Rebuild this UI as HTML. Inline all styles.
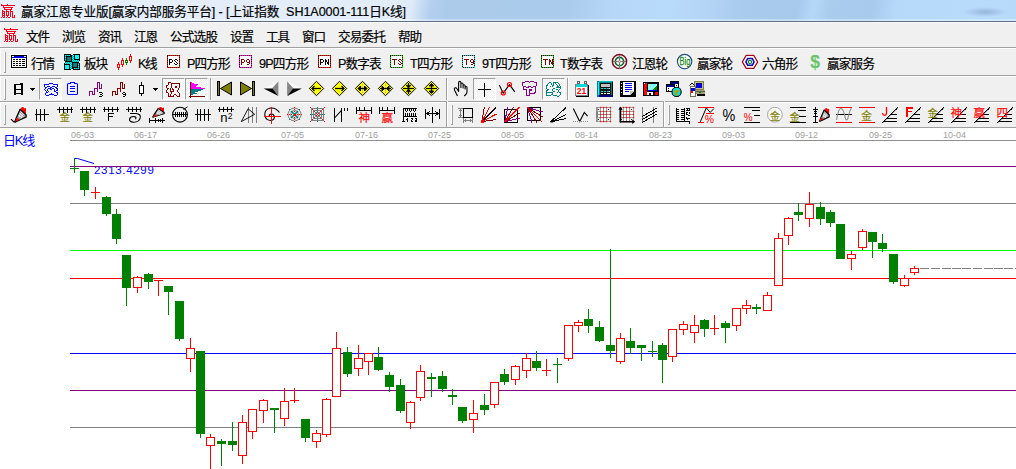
<!DOCTYPE html>
<html lang="zh"><head><meta charset="utf-8"><title>赢家江恩专业版</title>
<style>
html,body{margin:0;padding:0;background:#fff}
body{width:1016px;height:469px;overflow:hidden;position:relative;font-family:"Liberation Sans",sans-serif}
#win{position:absolute;left:0;top:0;width:1016px;height:469px;overflow:hidden;background:#fff}
#win div,#win svg,#win span,#win i,#win b{position:absolute}
svg.t{overflow:visible;pointer-events:none}
svg.ic{overflow:visible}
svg.t text,text.cj{font-family:"Liberation Sans","Noto Sans CJK SC",sans-serif}
svg.t text{white-space:pre}
#title{left:0;top:0;width:1016px;height:22px;background:radial-gradient(ellipse 22px 5px at 985px 12px,rgba(120,150,190,.55),rgba(120,150,190,0)),linear-gradient(100deg,#dfeaf8 0,#dbe8f8 406px,#c8ddf4 415px,#b3cfee 426px,#accbeb 442px,#abcbec 560px,#b6d7f8 605px,#b9dbfb 660px,#b3d4f5 700px,#a9cbed 730px,#a7c9eb 787px,#b5d7f8 802px,#aacced 818px,#a8caec 860px,#b6d8f9 884px,#b9dbfb 960px,#b7d9fa 1016px)}
#title:after{content:"";position:absolute;left:0;top:19px;width:1016px;height:2px;background:linear-gradient(rgba(255,255,255,.25),rgba(255,255,255,.5))}
#title:before{content:"";position:absolute;left:0;top:21px;width:1016px;height:1px;background:#5f6f85;z-index:2}
#title .glow{left:0;top:0;width:460px;height:20px;background:linear-gradient(90deg,rgba(255,255,255,.2) 0,rgba(255,255,255,.2) 400px,rgba(255,255,255,0) 422px)}
#menu{left:0;top:22px;width:1016px;height:25px;background:linear-gradient(#fafafa 0 1px,#f0f0f0 1px)}
.tb{left:0;width:1016px;background:#f0f0f0}
#tb1{top:47px;height:28px;background:linear-gradient(#a0a0a0 0 1px,#fff 1px 2px,#f0f0f0 2px)}
#tb2{top:75px;height:26px;background:linear-gradient(#a0a0a0 0 1px,#fff 1px 2px,#f0f0f0 2px)}
#tb3{top:101px;height:27px;background:linear-gradient(#a0a0a0 0 1px,#fff 1px 2px,#f0f0f0 2px 26px,#a0a0a0 26px)}
i.grip{width:1px;background:#fff;border-right:1px solid #a0a0a0;border-bottom:1px solid #a0a0a0}
i.bandsep{top:0;width:1px;height:26px;background:#a0a0a0;border-right:1px solid #fff}
i.sep{width:1px;height:22px;background:#a0a0a0;border-right:1px solid #fff}
i.pr{width:22px;height:21px;border:1px solid;border-color:#a0a0a0 #fff #fff #a0a0a0;background:repeating-conic-gradient(#fff 0 25%,#f0f0f0 0 50%) 0 0/2px 2px}
#view{left:0;top:128px;width:1016px;height:341px;background:#fff}
#chart{left:0;top:0}
.dt{top:2px;font-size:9px;line-height:10px;color:#a0a0a0;white-space:nowrap}
#hi{left:95px;top:35px;font-size:11.5px;line-height:14px;color:#0000ff;letter-spacing:.75px;white-space:nowrap}

#menu:after,.tb:after{content:"";position:absolute;left:0;top:1px;bottom:0;width:1px;background:#fafafa}
#tb3:after{bottom:1px}
#hi{left:94px;letter-spacing:.68px}

</style></head>
<body>

<div id="win">
<div id="title"><div class="glow"></div><svg class="ic" style="left:0;top:0" width="16" height="20" viewBox="0 0 16 20" shape-rendering="crispEdges"><title>赢</title><rect x="1" y="4" width="1" height="1" fill="#f4001c"/><rect x="7" y="4" width="1" height="1" fill="#f4001c"/><rect x="1" y="5" width="14" height="1" fill="#f4001c"/><rect x="3" y="6" width="1" height="1" fill="#f4001c"/><rect x="3" y="7" width="10" height="1" fill="#f4001c"/><rect x="4" y="8" width="1" height="1" fill="#f4001c"/><rect x="11" y="8" width="1" height="1" fill="#f4001c"/><rect x="4" y="9" width="8" height="1" fill="#f4001c"/><rect x="2" y="10" width="1" height="1" fill="#f4001c"/><rect x="6" y="10" width="1" height="1" fill="#f4001c"/><rect x="10" y="10" width="1" height="1" fill="#f4001c"/><rect x="2" y="11" width="3" height="1" fill="#f4001c"/><rect x="6" y="11" width="3" height="1" fill="#f4001c"/><rect x="10" y="11" width="3" height="1" fill="#f4001c"/><rect x="2" y="12" width="1" height="1" fill="#f4001c"/><rect x="4" y="12" width="1" height="1" fill="#f4001c"/><rect x="6" y="12" width="1" height="1" fill="#f4001c"/><rect x="8" y="12" width="1" height="1" fill="#f4001c"/><rect x="10" y="12" width="1" height="1" fill="#f4001c"/><rect x="12" y="12" width="1" height="1" fill="#f4001c"/><rect x="2" y="13" width="3" height="1" fill="#f4001c"/><rect x="6" y="13" width="1" height="1" fill="#f4001c"/><rect x="8" y="13" width="1" height="1" fill="#f4001c"/><rect x="10" y="13" width="1" height="1" fill="#f4001c"/><rect x="12" y="13" width="1" height="1" fill="#f4001c"/><rect x="2" y="14" width="1" height="1" fill="#f4001c"/><rect x="4" y="14" width="1" height="1" fill="#f4001c"/><rect x="6" y="14" width="1" height="1" fill="#f4001c"/><rect x="8" y="14" width="1" height="1" fill="#f4001c"/><rect x="10" y="14" width="1" height="1" fill="#f4001c"/><rect x="12" y="14" width="1" height="1" fill="#f4001c"/><rect x="2" y="15" width="3" height="1" fill="#f4001c"/><rect x="6" y="15" width="3" height="1" fill="#f4001c"/><rect x="10" y="15" width="1" height="1" fill="#f4001c"/><rect x="12" y="15" width="1" height="1" fill="#f4001c"/><rect x="14" y="15" width="1" height="1" fill="#f4001c"/><rect x="2" y="16" width="1" height="1" fill="#f4001c"/><rect x="4" y="16" width="1" height="1" fill="#f4001c"/><rect x="7" y="16" width="1" height="1" fill="#f4001c"/><rect x="10" y="16" width="1" height="1" fill="#f4001c"/><rect x="12" y="16" width="1" height="1" fill="#f4001c"/><rect x="14" y="16" width="1" height="1" fill="#f4001c"/><rect x="1" y="17" width="1" height="1" fill="#f4001c"/><rect x="3" y="17" width="2" height="1" fill="#f4001c"/><rect x="6" y="17" width="1" height="1" fill="#f4001c"/><rect x="8" y="17" width="2" height="1" fill="#f4001c"/><rect x="12" y="17" width="3" height="1" fill="#f4001c"/></svg><svg class="t" style="left:21px;top:2px" width="387" height="18" role="img"><text x="0" y="13.63" font-size="12.6" fill="#000" stroke="#000" stroke-width="0.18" textLength="385" lengthAdjust="spacing" xml:space="preserve">赢家江恩专业版[赢家内部服务平台] - [上证指数  SH1A0001-111日K线]</text></svg></div>
<div id="menu"><svg class="ic" style="left:3px;top:2px" width="16" height="20" viewBox="0 0 16 20" shape-rendering="crispEdges"><title>赢</title><rect x="1" y="4" width="1" height="1" fill="#f4001c"/><rect x="7" y="4" width="1" height="1" fill="#f4001c"/><rect x="1" y="5" width="14" height="1" fill="#f4001c"/><rect x="3" y="6" width="1" height="1" fill="#f4001c"/><rect x="3" y="7" width="10" height="1" fill="#f4001c"/><rect x="4" y="8" width="1" height="1" fill="#f4001c"/><rect x="11" y="8" width="1" height="1" fill="#f4001c"/><rect x="4" y="9" width="8" height="1" fill="#f4001c"/><rect x="2" y="10" width="1" height="1" fill="#f4001c"/><rect x="6" y="10" width="1" height="1" fill="#f4001c"/><rect x="10" y="10" width="1" height="1" fill="#f4001c"/><rect x="2" y="11" width="3" height="1" fill="#f4001c"/><rect x="6" y="11" width="3" height="1" fill="#f4001c"/><rect x="10" y="11" width="3" height="1" fill="#f4001c"/><rect x="2" y="12" width="1" height="1" fill="#f4001c"/><rect x="4" y="12" width="1" height="1" fill="#f4001c"/><rect x="6" y="12" width="1" height="1" fill="#f4001c"/><rect x="8" y="12" width="1" height="1" fill="#f4001c"/><rect x="10" y="12" width="1" height="1" fill="#f4001c"/><rect x="12" y="12" width="1" height="1" fill="#f4001c"/><rect x="2" y="13" width="3" height="1" fill="#f4001c"/><rect x="6" y="13" width="1" height="1" fill="#f4001c"/><rect x="8" y="13" width="1" height="1" fill="#f4001c"/><rect x="10" y="13" width="1" height="1" fill="#f4001c"/><rect x="12" y="13" width="1" height="1" fill="#f4001c"/><rect x="2" y="14" width="1" height="1" fill="#f4001c"/><rect x="4" y="14" width="1" height="1" fill="#f4001c"/><rect x="6" y="14" width="1" height="1" fill="#f4001c"/><rect x="8" y="14" width="1" height="1" fill="#f4001c"/><rect x="10" y="14" width="1" height="1" fill="#f4001c"/><rect x="12" y="14" width="1" height="1" fill="#f4001c"/><rect x="2" y="15" width="3" height="1" fill="#f4001c"/><rect x="6" y="15" width="3" height="1" fill="#f4001c"/><rect x="10" y="15" width="1" height="1" fill="#f4001c"/><rect x="12" y="15" width="1" height="1" fill="#f4001c"/><rect x="14" y="15" width="1" height="1" fill="#f4001c"/><rect x="2" y="16" width="1" height="1" fill="#f4001c"/><rect x="4" y="16" width="1" height="1" fill="#f4001c"/><rect x="7" y="16" width="1" height="1" fill="#f4001c"/><rect x="10" y="16" width="1" height="1" fill="#f4001c"/><rect x="12" y="16" width="1" height="1" fill="#f4001c"/><rect x="14" y="16" width="1" height="1" fill="#f4001c"/><rect x="1" y="17" width="1" height="1" fill="#f4001c"/><rect x="3" y="17" width="2" height="1" fill="#f4001c"/><rect x="6" y="17" width="1" height="1" fill="#f4001c"/><rect x="8" y="17" width="2" height="1" fill="#f4001c"/><rect x="12" y="17" width="3" height="1" fill="#f4001c"/></svg><svg class="t" style="left:26px;top:5px" width="26" height="18" role="img"><text x="0" y="13.63" font-size="12.6" fill="#000" stroke="#000" stroke-width="0.18" textLength="24" lengthAdjust="spacing">文件</text></svg><svg class="t" style="left:62px;top:5px" width="26" height="18" role="img"><text x="0" y="13.63" font-size="12.6" fill="#000" stroke="#000" stroke-width="0.18" textLength="24" lengthAdjust="spacing">浏览</text></svg><svg class="t" style="left:98px;top:5px" width="26" height="18" role="img"><text x="0" y="13.63" font-size="12.6" fill="#000" stroke="#000" stroke-width="0.18" textLength="24" lengthAdjust="spacing">资讯</text></svg><svg class="t" style="left:134px;top:5px" width="26" height="18" role="img"><text x="0" y="13.63" font-size="12.6" fill="#000" stroke="#000" stroke-width="0.18" textLength="24" lengthAdjust="spacing">江恩</text></svg><svg class="t" style="left:170px;top:5px" width="50" height="18" role="img"><text x="0" y="13.63" font-size="12.6" fill="#000" stroke="#000" stroke-width="0.18" textLength="48" lengthAdjust="spacing">公式选股</text></svg><svg class="t" style="left:230px;top:5px" width="26" height="18" role="img"><text x="0" y="13.63" font-size="12.6" fill="#000" stroke="#000" stroke-width="0.18" textLength="24" lengthAdjust="spacing">设置</text></svg><svg class="t" style="left:266px;top:5px" width="26" height="18" role="img"><text x="0" y="13.63" font-size="12.6" fill="#000" stroke="#000" stroke-width="0.18" textLength="24" lengthAdjust="spacing">工具</text></svg><svg class="t" style="left:302px;top:5px" width="26" height="18" role="img"><text x="0" y="13.63" font-size="12.6" fill="#000" stroke="#000" stroke-width="0.18" textLength="24" lengthAdjust="spacing">窗口</text></svg><svg class="t" style="left:338px;top:5px" width="50" height="18" role="img"><text x="0" y="13.63" font-size="12.6" fill="#000" stroke="#000" stroke-width="0.18" textLength="48" lengthAdjust="spacing">交易委托</text></svg><svg class="t" style="left:398px;top:5px" width="26" height="18" role="img"><text x="0" y="13.63" font-size="12.6" fill="#000" stroke="#000" stroke-width="0.18" textLength="24" lengthAdjust="spacing">帮助</text></svg></div>
<div id="tb1" class="tb"><i class="grip" style="left:4px;top:5px;height:20px"></i><svg class="ic" style="left:10px;top:7px" width="18" height="15" viewBox="10 54 18 15" shape-rendering="crispEdges"><rect x="10" y="54" width="18" height="15" fill="#fff"/><rect x="11.5" y="55.5" width="15" height="12" fill="#fff" stroke="#000" stroke-width="1"/><rect x="12" y="56" width="14" height="2" fill="#0000e0"/><rect x="12" y="56" width="2" height="1" fill="#fff"/><rect x="24" y="56" width="2" height="1" fill="#fff"/><rect x="13" y="59" width="2" height="1" fill="#000"/><rect x="16" y="59" width="2" height="1" fill="#000"/><rect x="19" y="59" width="2" height="1" fill="#000"/><rect x="22" y="59" width="3" height="1" fill="#000"/><rect x="13" y="61" width="2" height="1" fill="#000"/><rect x="16" y="61" width="2" height="1" fill="#000"/><rect x="19" y="61" width="2" height="1" fill="#000"/><rect x="22" y="61" width="3" height="1" fill="#000"/><rect x="13" y="63" width="2" height="1" fill="#000"/><rect x="16" y="63" width="2" height="1" fill="#000"/><rect x="19" y="63" width="2" height="1" fill="#000"/><rect x="22" y="63" width="3" height="1" fill="#000"/><rect x="13" y="65" width="2" height="1" fill="#000"/><rect x="16" y="65" width="2" height="1" fill="#000"/><rect x="19" y="65" width="2" height="1" fill="#000"/><rect x="22" y="65" width="3" height="1" fill="#000"/></svg><svg class="t" style="left:31px;top:7px" width="26" height="18" role="img"><text x="0" y="13.63" font-size="12.6" fill="#000" stroke="#000" stroke-width="0.18" textLength="24" lengthAdjust="spacing">行情</text></svg><svg class="ic" style="left:64px;top:7px" width="16" height="16" viewBox="64 54 16 16" shape-rendering="crispEdges"><rect x="64" y="54" width="16" height="16" fill="#000"/><rect x="71" y="54" width="2" height="1" fill="#f0f0f0"/><rect x="71" y="69" width="2" height="1" fill="#f0f0f0"/><rect x="64" y="61" width="1" height="2" fill="#f0f0f0"/><rect x="79" y="61" width="1" height="2" fill="#f0f0f0"/><rect x="65" y="55" width="1" height="1" fill="#00ffff"/><rect x="66" y="55" width="1" height="1" fill="#009c9c"/><rect x="67" y="55" width="1" height="1" fill="#00ffff"/><rect x="68" y="55" width="1" height="1" fill="#009c9c"/><rect x="69" y="55" width="1" height="1" fill="#00ffff"/><rect x="65" y="56" width="1" height="1" fill="#009c9c"/><rect x="65" y="57" width="1" height="1" fill="#00ffff"/><rect x="65" y="58" width="1" height="1" fill="#009c9c"/><rect x="65" y="59" width="1" height="1" fill="#00ffff"/><rect x="65" y="60" width="1" height="1" fill="#009c9c"/><rect x="67" y="57" width="4" height="4" fill="#008080"/><rect x="75" y="55" width="4" height="4" fill="#00ffff"/><rect x="72" y="55" width="1" height="1" fill="#009c9c"/><rect x="73" y="55" width="1" height="1" fill="#00ffff"/><rect x="72" y="56" width="1" height="1" fill="#00ffff"/><rect x="73" y="56" width="1" height="1" fill="#009c9c"/><rect x="72" y="57" width="1" height="1" fill="#009c9c"/><rect x="73" y="57" width="1" height="1" fill="#00ffff"/><rect x="72" y="58" width="1" height="1" fill="#00ffff"/><rect x="73" y="58" width="1" height="1" fill="#009c9c"/><rect x="72" y="59" width="1" height="1" fill="#009c9c"/><rect x="73" y="59" width="1" height="1" fill="#00ffff"/><rect x="72" y="60" width="1" height="1" fill="#00ffff"/><rect x="73" y="60" width="1" height="1" fill="#009c9c"/><rect x="72" y="61" width="1" height="1" fill="#009c9c"/><rect x="73" y="61" width="1" height="1" fill="#00ffff"/><rect x="74" y="60" width="1" height="1" fill="#00ffff"/><rect x="75" y="60" width="1" height="1" fill="#009c9c"/><rect x="76" y="60" width="1" height="1" fill="#00ffff"/><rect x="77" y="60" width="1" height="1" fill="#009c9c"/><rect x="78" y="60" width="1" height="1" fill="#00ffff"/><rect x="74" y="61" width="1" height="1" fill="#009c9c"/><rect x="75" y="61" width="1" height="1" fill="#00ffff"/><rect x="76" y="61" width="1" height="1" fill="#009c9c"/><rect x="77" y="61" width="1" height="1" fill="#00ffff"/><rect x="78" y="61" width="1" height="1" fill="#009c9c"/><rect x="65" y="65" width="4" height="4" fill="#00ffff"/><rect x="65" y="62" width="1" height="1" fill="#009c9c"/><rect x="66" y="62" width="1" height="1" fill="#00ffff"/><rect x="67" y="62" width="1" height="1" fill="#009c9c"/><rect x="68" y="62" width="1" height="1" fill="#00ffff"/><rect x="69" y="62" width="1" height="1" fill="#009c9c"/><rect x="70" y="62" width="1" height="1" fill="#00ffff"/><rect x="71" y="62" width="1" height="1" fill="#009c9c"/><rect x="65" y="63" width="1" height="1" fill="#00ffff"/><rect x="66" y="63" width="1" height="1" fill="#009c9c"/><rect x="67" y="63" width="1" height="1" fill="#00ffff"/><rect x="68" y="63" width="1" height="1" fill="#009c9c"/><rect x="69" y="63" width="1" height="1" fill="#00ffff"/><rect x="70" y="63" width="1" height="1" fill="#009c9c"/><rect x="71" y="63" width="1" height="1" fill="#00ffff"/><rect x="70" y="64" width="1" height="1" fill="#00ffff"/><rect x="71" y="64" width="1" height="1" fill="#009c9c"/><rect x="70" y="65" width="1" height="1" fill="#009c9c"/><rect x="71" y="65" width="1" height="1" fill="#00ffff"/><rect x="70" y="66" width="1" height="1" fill="#00ffff"/><rect x="71" y="66" width="1" height="1" fill="#009c9c"/><rect x="70" y="67" width="1" height="1" fill="#009c9c"/><rect x="71" y="67" width="1" height="1" fill="#00ffff"/><rect x="70" y="68" width="1" height="1" fill="#00ffff"/><rect x="71" y="68" width="1" height="1" fill="#009c9c"/><rect x="73" y="63" width="4" height="4" fill="#008080"/><rect x="78" y="63" width="1" height="1" fill="#009c9c"/><rect x="78" y="64" width="1" height="1" fill="#00ffff"/><rect x="78" y="65" width="1" height="1" fill="#009c9c"/><rect x="78" y="66" width="1" height="1" fill="#00ffff"/><rect x="78" y="67" width="1" height="1" fill="#009c9c"/><rect x="78" y="68" width="1" height="1" fill="#00ffff"/><rect x="74" y="68" width="1" height="1" fill="#00ffff"/><rect x="75" y="68" width="1" height="1" fill="#009c9c"/><rect x="76" y="68" width="1" height="1" fill="#00ffff"/><rect x="77" y="68" width="1" height="1" fill="#009c9c"/></svg><svg class="t" style="left:84px;top:7px" width="26" height="18" role="img"><text x="0" y="13.63" font-size="12.6" fill="#000" stroke="#000" stroke-width="0.18" textLength="24" lengthAdjust="spacing">板块</text></svg><svg class="ic" style="left:115px;top:5px" width="20" height="20" viewBox="115 52 20 20" shape-rendering="crispEdges"><g opacity=".55" stroke="#fff" stroke-width="2"><rect x="117.5" y="63.5" width="2" height="5" fill="#fff" stroke="#fff" stroke-width="3"/><rect x="121.5" y="59.5" width="2" height="6" fill="#fff" stroke="#fff" stroke-width="3"/><rect x="125.5" y="59.5" width="2" height="4" fill="#fff" stroke="#fff" stroke-width="3"/><rect x="129.5" y="55.5" width="2" height="6" fill="#fff" stroke="#fff" stroke-width="3"/></g><rect x="118" y="62" width="1" height="8" fill="#ff0000"/><rect x="117.5" y="64.5" width="2" height="3" fill="#fff" stroke="#ff0000" stroke-width="1"/><rect x="122" y="58" width="1" height="9" fill="#ff0000"/><rect x="121.5" y="60.5" width="2" height="4" fill="#fff" stroke="#ff0000" stroke-width="1"/><rect x="126" y="58" width="1" height="7" fill="#008000"/><rect x="125.5" y="60.5" width="2" height="2" fill="#fff" stroke="#008000" stroke-width="1"/><rect x="130" y="54" width="1" height="9" fill="#ff0000"/><rect x="129.5" y="56.5" width="2" height="4" fill="#fff" stroke="#ff0000" stroke-width="1"/></svg><svg class="t" style="left:138px;top:7px" width="22" height="18" role="img"><text x="0" y="13.63" font-size="12.6" fill="#000" stroke="#000" stroke-width="0.18" textLength="19.6" lengthAdjust="spacing">K线</text></svg><svg class="ic" style="left:167px;top:8px" width="13" height="13" viewBox="167 55 13 13" shape-rendering="crispEdges"><title>PS</title><rect x="167.5" y="55.5" width="12" height="12" fill="#fcfcfc" stroke="#400000" stroke-width="1"/><rect x="167.5" y="55.5" width="12" height="12" fill="none" stroke="#ff0000" stroke-dasharray="1 1"/><rect x="169" y="59" width="1" height="1" fill="#000"/><rect x="170" y="59" width="1" height="1" fill="#000"/><rect x="171" y="59" width="1" height="1" fill="#000"/><rect x="169" y="60" width="1" height="1" fill="#000"/><rect x="172" y="60" width="1" height="1" fill="#000"/><rect x="169" y="61" width="1" height="1" fill="#000"/><rect x="172" y="61" width="1" height="1" fill="#000"/><rect x="169" y="62" width="1" height="1" fill="#000"/><rect x="170" y="62" width="1" height="1" fill="#000"/><rect x="171" y="62" width="1" height="1" fill="#000"/><rect x="169" y="63" width="1" height="1" fill="#000"/><rect x="169" y="64" width="1" height="1" fill="#000"/><rect x="175" y="59" width="1" height="1" fill="#000"/><rect x="176" y="59" width="1" height="1" fill="#000"/><rect x="174" y="60" width="1" height="1" fill="#000"/><rect x="177" y="60" width="1" height="1" fill="#000"/><rect x="175" y="61" width="1" height="1" fill="#000"/><rect x="176" y="62" width="1" height="1" fill="#000"/><rect x="174" y="63" width="1" height="1" fill="#000"/><rect x="177" y="63" width="1" height="1" fill="#000"/><rect x="175" y="64" width="1" height="1" fill="#000"/><rect x="176" y="64" width="1" height="1" fill="#000"/></svg><svg class="t" style="left:187px;top:7px" width="46" height="18" role="img"><text x="0" y="13.63" font-size="12.6" fill="#000" stroke="#000" stroke-width="0.18" textLength="43.5" lengthAdjust="spacing">P四方形</text></svg><svg class="ic" style="left:239px;top:8px" width="13" height="13" viewBox="239 55 13 13" shape-rendering="crispEdges"><title>P9</title><rect x="239.5" y="55.5" width="12" height="12" fill="#fcfcfc" stroke="#400000" stroke-width="1"/><rect x="239.5" y="55.5" width="12" height="12" fill="none" stroke="#ff00ff" stroke-dasharray="1 1"/><rect x="241" y="59" width="1" height="1" fill="#800000"/><rect x="242" y="59" width="1" height="1" fill="#800000"/><rect x="243" y="59" width="1" height="1" fill="#800000"/><rect x="241" y="60" width="1" height="1" fill="#800000"/><rect x="244" y="60" width="1" height="1" fill="#800000"/><rect x="241" y="61" width="1" height="1" fill="#800000"/><rect x="244" y="61" width="1" height="1" fill="#800000"/><rect x="241" y="62" width="1" height="1" fill="#800000"/><rect x="242" y="62" width="1" height="1" fill="#800000"/><rect x="243" y="62" width="1" height="1" fill="#800000"/><rect x="241" y="63" width="1" height="1" fill="#800000"/><rect x="241" y="64" width="1" height="1" fill="#800000"/><rect x="247" y="59" width="1" height="1" fill="#800000"/><rect x="248" y="59" width="1" height="1" fill="#800000"/><rect x="246" y="60" width="1" height="1" fill="#800000"/><rect x="249" y="60" width="1" height="1" fill="#800000"/><rect x="246" y="61" width="1" height="1" fill="#800000"/><rect x="249" y="61" width="1" height="1" fill="#800000"/><rect x="247" y="62" width="1" height="1" fill="#800000"/><rect x="248" y="62" width="1" height="1" fill="#800000"/><rect x="249" y="62" width="1" height="1" fill="#800000"/><rect x="249" y="63" width="1" height="1" fill="#800000"/><rect x="247" y="64" width="1" height="1" fill="#800000"/><rect x="248" y="64" width="1" height="1" fill="#800000"/></svg><svg class="t" style="left:259px;top:7px" width="52" height="18" role="img"><text x="0" y="13.63" font-size="12.6" fill="#000" stroke="#000" stroke-width="0.18" textLength="50.1" lengthAdjust="spacing">9P四方形</text></svg><svg class="ic" style="left:318px;top:8px" width="13" height="13" viewBox="318 55 13 13" shape-rendering="crispEdges"><title>PN</title><rect x="318.5" y="55.5" width="12" height="12" fill="#fcfcfc" stroke="#400000" stroke-width="1"/><rect x="318.5" y="55.5" width="12" height="12" fill="none" stroke="#ff0000" stroke-dasharray="1 1"/><rect x="320" y="59" width="1" height="1" fill="#000"/><rect x="321" y="59" width="1" height="1" fill="#000"/><rect x="322" y="59" width="1" height="1" fill="#000"/><rect x="320" y="60" width="1" height="1" fill="#000"/><rect x="323" y="60" width="1" height="1" fill="#000"/><rect x="320" y="61" width="1" height="1" fill="#000"/><rect x="323" y="61" width="1" height="1" fill="#000"/><rect x="320" y="62" width="1" height="1" fill="#000"/><rect x="321" y="62" width="1" height="1" fill="#000"/><rect x="322" y="62" width="1" height="1" fill="#000"/><rect x="320" y="63" width="1" height="1" fill="#000"/><rect x="320" y="64" width="1" height="1" fill="#000"/><rect x="325" y="59" width="1" height="1" fill="#000"/><rect x="328" y="59" width="1" height="1" fill="#000"/><rect x="325" y="60" width="1" height="1" fill="#000"/><rect x="326" y="60" width="1" height="1" fill="#000"/><rect x="328" y="60" width="1" height="1" fill="#000"/><rect x="325" y="61" width="1" height="1" fill="#000"/><rect x="326" y="61" width="1" height="1" fill="#000"/><rect x="328" y="61" width="1" height="1" fill="#000"/><rect x="325" y="62" width="1" height="1" fill="#000"/><rect x="327" y="62" width="1" height="1" fill="#000"/><rect x="328" y="62" width="1" height="1" fill="#000"/><rect x="325" y="63" width="1" height="1" fill="#000"/><rect x="327" y="63" width="1" height="1" fill="#000"/><rect x="328" y="63" width="1" height="1" fill="#000"/><rect x="325" y="64" width="1" height="1" fill="#000"/><rect x="328" y="64" width="1" height="1" fill="#000"/></svg><svg class="t" style="left:338px;top:7px" width="46" height="18" role="img"><text x="0" y="13.63" font-size="12.6" fill="#000" stroke="#000" stroke-width="0.18" textLength="43.5" lengthAdjust="spacing">P数字表</text></svg><svg class="ic" style="left:390px;top:8px" width="13" height="13" viewBox="390 55 13 13" shape-rendering="crispEdges"><title>TS</title><rect x="390.5" y="55.5" width="12" height="12" fill="#fcfcfc" stroke="#400000" stroke-width="1"/><rect x="390.5" y="55.5" width="12" height="12" fill="none" stroke="#00e000" stroke-dasharray="1 1"/><rect x="392" y="59" width="1" height="1" fill="#800000"/><rect x="393" y="59" width="1" height="1" fill="#800000"/><rect x="394" y="59" width="1" height="1" fill="#800000"/><rect x="395" y="59" width="1" height="1" fill="#800000"/><rect x="396" y="59" width="1" height="1" fill="#800000"/><rect x="394" y="60" width="1" height="1" fill="#800000"/><rect x="394" y="61" width="1" height="1" fill="#800000"/><rect x="394" y="62" width="1" height="1" fill="#800000"/><rect x="394" y="63" width="1" height="1" fill="#800000"/><rect x="394" y="64" width="1" height="1" fill="#800000"/><rect x="399" y="59" width="1" height="1" fill="#800000"/><rect x="400" y="59" width="1" height="1" fill="#800000"/><rect x="398" y="60" width="1" height="1" fill="#800000"/><rect x="401" y="60" width="1" height="1" fill="#800000"/><rect x="399" y="61" width="1" height="1" fill="#800000"/><rect x="400" y="62" width="1" height="1" fill="#800000"/><rect x="398" y="63" width="1" height="1" fill="#800000"/><rect x="401" y="63" width="1" height="1" fill="#800000"/><rect x="399" y="64" width="1" height="1" fill="#800000"/><rect x="400" y="64" width="1" height="1" fill="#800000"/></svg><svg class="t" style="left:410px;top:7px" width="45" height="18" role="img"><text x="0" y="13.63" font-size="12.6" fill="#000" stroke="#000" stroke-width="0.18" textLength="43.1" lengthAdjust="spacing">T四方形</text></svg><svg class="ic" style="left:462px;top:8px" width="13" height="13" viewBox="462 55 13 13" shape-rendering="crispEdges"><title>T9</title><rect x="462.5" y="55.5" width="12" height="12" fill="#fcfcfc" stroke="#400000" stroke-width="1"/><rect x="462.5" y="55.5" width="12" height="12" fill="none" stroke="#00e0e0" stroke-dasharray="1 1"/><rect x="464" y="59" width="1" height="1" fill="#800000"/><rect x="465" y="59" width="1" height="1" fill="#800000"/><rect x="466" y="59" width="1" height="1" fill="#800000"/><rect x="467" y="59" width="1" height="1" fill="#800000"/><rect x="468" y="59" width="1" height="1" fill="#800000"/><rect x="466" y="60" width="1" height="1" fill="#800000"/><rect x="466" y="61" width="1" height="1" fill="#800000"/><rect x="466" y="62" width="1" height="1" fill="#800000"/><rect x="466" y="63" width="1" height="1" fill="#800000"/><rect x="466" y="64" width="1" height="1" fill="#800000"/><rect x="471" y="59" width="1" height="1" fill="#800000"/><rect x="472" y="59" width="1" height="1" fill="#800000"/><rect x="470" y="60" width="1" height="1" fill="#800000"/><rect x="473" y="60" width="1" height="1" fill="#800000"/><rect x="470" y="61" width="1" height="1" fill="#800000"/><rect x="473" y="61" width="1" height="1" fill="#800000"/><rect x="471" y="62" width="1" height="1" fill="#800000"/><rect x="472" y="62" width="1" height="1" fill="#800000"/><rect x="473" y="62" width="1" height="1" fill="#800000"/><rect x="473" y="63" width="1" height="1" fill="#800000"/><rect x="471" y="64" width="1" height="1" fill="#800000"/><rect x="472" y="64" width="1" height="1" fill="#800000"/></svg><svg class="t" style="left:482px;top:7px" width="52" height="18" role="img"><text x="0" y="13.63" font-size="12.6" fill="#000" stroke="#000" stroke-width="0.18" textLength="49.7" lengthAdjust="spacing">9T四方形</text></svg><svg class="ic" style="left:541px;top:8px" width="13" height="13" viewBox="541 55 13 13" shape-rendering="crispEdges"><title>TN</title><rect x="541.5" y="55.5" width="12" height="12" fill="#fcfcfc" stroke="#400000" stroke-width="1"/><rect x="541.5" y="55.5" width="12" height="12" fill="none" stroke="#00c000" stroke-dasharray="1 1"/><rect x="543" y="59" width="1" height="1" fill="#800000"/><rect x="544" y="59" width="1" height="1" fill="#800000"/><rect x="545" y="59" width="1" height="1" fill="#800000"/><rect x="546" y="59" width="1" height="1" fill="#800000"/><rect x="547" y="59" width="1" height="1" fill="#800000"/><rect x="545" y="60" width="1" height="1" fill="#800000"/><rect x="545" y="61" width="1" height="1" fill="#800000"/><rect x="545" y="62" width="1" height="1" fill="#800000"/><rect x="545" y="63" width="1" height="1" fill="#800000"/><rect x="545" y="64" width="1" height="1" fill="#800000"/><rect x="549" y="59" width="1" height="1" fill="#800000"/><rect x="552" y="59" width="1" height="1" fill="#800000"/><rect x="549" y="60" width="1" height="1" fill="#800000"/><rect x="550" y="60" width="1" height="1" fill="#800000"/><rect x="552" y="60" width="1" height="1" fill="#800000"/><rect x="549" y="61" width="1" height="1" fill="#800000"/><rect x="550" y="61" width="1" height="1" fill="#800000"/><rect x="552" y="61" width="1" height="1" fill="#800000"/><rect x="549" y="62" width="1" height="1" fill="#800000"/><rect x="551" y="62" width="1" height="1" fill="#800000"/><rect x="552" y="62" width="1" height="1" fill="#800000"/><rect x="549" y="63" width="1" height="1" fill="#800000"/><rect x="551" y="63" width="1" height="1" fill="#800000"/><rect x="552" y="63" width="1" height="1" fill="#800000"/><rect x="549" y="64" width="1" height="1" fill="#800000"/><rect x="552" y="64" width="1" height="1" fill="#800000"/></svg><svg class="t" style="left:560px;top:7px" width="45" height="18" role="img"><text x="0" y="13.63" font-size="12.6" fill="#000" stroke="#000" stroke-width="0.18" textLength="43.1" lengthAdjust="spacing">T数字表</text></svg><svg class="ic" style="left:611px;top:6px" width="18" height="18" viewBox="611 53 18 18"><circle cx="619.5" cy="61.5" r="8.2" fill="#fff" stroke="#fff" stroke-width="0" shape-rendering="auto"/><circle cx="619.5" cy="61.5" r="7.1" fill="#fbfbfb" stroke="#7d0a1e" stroke-width="1.5" shape-rendering="auto"/><circle cx="619.5" cy="61.5" r="4.2" fill="none" stroke="#0b6a2b" stroke-width="1.7" shape-rendering="auto"/><circle cx="619.5" cy="61.5" r="1.6" fill="#f08a6a" stroke="none" stroke-width="1" shape-rendering="auto"/><line x1="613" y1="61.5" x2="626" y2="61.5" stroke="#7a7a7a" stroke-width="1" stroke-linecap="butt" shape-rendering="auto"/><line x1="619.5" y1="55" x2="619.5" y2="69" stroke="#7a7a7a" stroke-width="1" stroke-linecap="butt" shape-rendering="auto"/><circle cx="619.5" cy="61.5" r="0.8" fill="#ddd" stroke="none" stroke-width="1" shape-rendering="auto"/></svg><svg class="t" style="left:632px;top:7px" width="38" height="18" role="img"><text x="0" y="13.63" font-size="12.6" fill="#000" stroke="#000" stroke-width="0.18" textLength="36" lengthAdjust="spacing">江恩轮</text></svg><svg class="ic" style="left:676px;top:6px" width="18" height="18" viewBox="676 53 18 18"><circle cx="684.6" cy="61.6" r="8.1" fill="#fff" stroke="none" stroke-width="1" shape-rendering="auto"/><circle cx="684.6" cy="61.6" r="7.2" fill="#fdfdfd" stroke="#1f4f7d" stroke-width="1.2" shape-rendering="auto"/><text x="684.9" y="65.2" font-family="Liberation Sans,sans-serif" font-size="11" text-anchor="middle" fill="#1f8a24" stroke="#1f8a24" stroke-width=".3" textLength="10.8" lengthAdjust="spacingAndGlyphs">Big</text></svg><svg class="t" style="left:697px;top:7px" width="38" height="18" role="img"><text x="0" y="13.63" font-size="12.6" fill="#000" stroke="#000" stroke-width="0.18" textLength="36" lengthAdjust="spacing">赢家轮</text></svg><svg class="ic" style="left:740px;top:6px" width="20" height="18" viewBox="740 53 20 18"><path d="M742.3 61.9L746.2 55.4H753.8L757.7 61.9L753.8 68.4H746.2Z" fill="#fff" stroke="#fff" stroke-width="2.6" shape-rendering="auto"/><path d="M742.3 61.9L746.2 55.4H753.8L757.7 61.9L753.8 68.4H746.2Z" fill="#fdfdfd" stroke="#a00016" stroke-width="1.2" shape-rendering="auto"/><path d="M745.9 61.9L747.7 58.6H752.3L754.1 61.9L752.3 65.2H747.7Z" fill="none" stroke="#0a0ab4" stroke-width="1.5" shape-rendering="auto"/><circle cx="750" cy="61.9" r="1.6" fill="#fff" stroke="#007018" stroke-width="1.1" shape-rendering="auto"/></svg><svg class="t" style="left:762px;top:7px" width="38" height="18" role="img"><text x="0" y="13.63" font-size="12.6" fill="#000" stroke="#000" stroke-width="0.18" textLength="36" lengthAdjust="spacing">六角形</text></svg><b style="left:809px;top:5px;width:12px;height:20px;font:bold 17.5px/20px 'Liberation Sans',sans-serif;color:#6cc56e;text-align:center;text-shadow:0 0 1px #c4eac4">$</b><svg class="t" style="left:827px;top:7px" width="50" height="18" role="img"><text x="0" y="13.63" font-size="12.6" fill="#000" stroke="#000" stroke-width="0.18" textLength="48" lengthAdjust="spacing">赢家服务</text></svg></div>
<div id="tb2" class="tb"><i class="grip" style="left:4px;top:4px;height:20px"></i><svg class="ic" style="left:14px;top:8px" width="10" height="12" viewBox="14 83 10 12" shape-rendering="crispEdges"><title>日</title><rect x="14" y="84" width="2" height="11" fill="#000"/><rect x="21" y="83" width="2" height="12" fill="#000"/><rect x="14" y="84" width="9" height="1" fill="#000"/><rect x="16" y="89" width="5" height="1" fill="#000"/><rect x="16" y="93" width="5" height="1" fill="#000"/><rect x="20" y="83" width="3" height="1" fill="#000"/></svg><svg class="ic" style="left:30px;top:13px" width="5" height="3" viewBox="30 88 5 3" shape-rendering="crispEdges"><rect x="30" y="88" width="5" height="1" fill="#000"/><rect x="31" y="89" width="3" height="1" fill="#000"/><rect x="32" y="90" width="1" height="1" fill="#000"/></svg><i class="pr" style="left:39px;top:3px;width:21px;height:20px"></i><svg class="ic" style="left:43px;top:7px" width="17" height="15" viewBox="43 82 17 15" shape-rendering="crispEdges"><rect x="49" y="83" width="4" height="1" fill="#0000ff"/><rect x="44" y="84" width="5" height="1" fill="#0000ff"/><rect x="53" y="84" width="5" height="1" fill="#0000ff"/><rect x="44" y="85" width="1" height="1" fill="#0000ff"/><rect x="57" y="85" width="1" height="1" fill="#0000ff"/><rect x="44" y="86" width="1" height="1" fill="#0000ff"/><rect x="47" y="86" width="3" height="1" fill="#0000ff"/><rect x="52" y="86" width="3" height="1" fill="#0000ff"/><rect x="57" y="86" width="1" height="1" fill="#0000ff"/><rect x="45" y="87" width="2" height="1" fill="#0000ff"/><rect x="50" y="87" width="2" height="1" fill="#0000ff"/><rect x="55" y="87" width="2" height="1" fill="#0000ff"/><rect x="45" y="88" width="1" height="1" fill="#0000ff"/><rect x="48" y="88" width="3" height="1" fill="#0000ff"/><rect x="52" y="88" width="2" height="1" fill="#0000ff"/><rect x="56" y="88" width="2" height="1" fill="#0000ff"/><rect x="44" y="89" width="1" height="1" fill="#0000ff"/><rect x="47" y="89" width="1" height="1" fill="#0000ff"/><rect x="50" y="89" width="2" height="1" fill="#0000ff"/><rect x="54" y="89" width="1" height="1" fill="#0000ff"/><rect x="57" y="89" width="1" height="1" fill="#0000ff"/><rect x="45" y="90" width="1" height="1" fill="#0000ff"/><rect x="47" y="90" width="1" height="1" fill="#0000ff"/><rect x="54" y="90" width="1" height="1" fill="#0000ff"/><rect x="56" y="90" width="2" height="1" fill="#0000ff"/><rect x="46" y="91" width="1" height="1" fill="#0000ff"/><rect x="48" y="91" width="1" height="1" fill="#0000ff"/><rect x="54" y="91" width="2" height="1" fill="#0000ff"/><rect x="46" y="92" width="2" height="1" fill="#0000ff"/><rect x="56" y="92" width="2" height="1" fill="#0000ff"/><rect x="45" y="93" width="1" height="1" fill="#0000ff"/><rect x="51" y="93" width="1" height="1" fill="#0000ff"/><rect x="57" y="93" width="1" height="1" fill="#0000ff"/><rect x="45" y="94" width="1" height="1" fill="#0000ff"/><rect x="49" y="94" width="5" height="1" fill="#0000ff"/><rect x="57" y="94" width="1" height="1" fill="#0000ff"/><rect x="46" y="95" width="3" height="1" fill="#0000ff"/><rect x="54" y="95" width="3" height="1" fill="#0000ff"/></svg><svg class="ic" style="left:66px;top:6px" width="13" height="15" viewBox="66 81 13 15" shape-rendering="crispEdges"><path d="M68.5 83.5H70.5V82.5H74.5V83.5H76.5Q77.5 83.5 77.5 84.5V93.5Q77.5 94.5 76.5 94.5H68.5Q67.5 94.5 67.5 93.5V84.5Q67.5 83.5 68.5 83.5Z" fill="none" stroke="#0000ff" stroke-width="1.05" shape-rendering="auto"/><rect x="70" y="86" width="5" height="1" fill="#0000ff"/><rect x="70" y="88" width="5" height="1" fill="#0000ff"/><rect x="70" y="91" width="5" height="1" fill="#0000ff"/></svg><svg class="ic" style="left:89px;top:6px" width="16" height="17" viewBox="89 81 16 17" shape-rendering="crispEdges"><rect x="89" y="91" width="1" height="5" fill="#800080"/><rect x="89" y="91" width="4" height="1" fill="#800080"/><rect x="92" y="91" width="1" height="4" fill="#800080"/><rect x="92" y="94" width="3" height="1" fill="#800080"/><rect x="94" y="88" width="1" height="7" fill="#800080"/><rect x="94" y="88" width="4" height="1" fill="#800080"/><rect x="97" y="82" width="1" height="10" fill="#800080"/><rect x="97" y="82" width="3" height="1" fill="#800080"/><rect x="99" y="82" width="1" height="7" fill="#800080"/><rect x="99" y="88" width="3" height="1" fill="#800080"/><rect x="101" y="84" width="1" height="5" fill="#800080"/><rect x="99" y="92" width="1" height="1" fill="#000"/><rect x="100" y="92" width="1" height="1" fill="#000"/><rect x="101" y="92" width="1" height="1" fill="#000"/><rect x="102" y="93" width="1" height="1" fill="#000"/><rect x="100" y="94" width="1" height="1" fill="#000"/><rect x="101" y="94" width="1" height="1" fill="#000"/><rect x="102" y="95" width="1" height="1" fill="#000"/><rect x="99" y="96" width="1" height="1" fill="#000"/><rect x="100" y="96" width="1" height="1" fill="#000"/><rect x="101" y="96" width="1" height="1" fill="#000"/></svg><svg class="ic" style="left:112px;top:6px" width="16" height="17" viewBox="112 81 16 17" shape-rendering="crispEdges"><rect x="112" y="91" width="1" height="5" fill="#800000"/><rect x="112" y="91" width="4" height="1" fill="#800000"/><rect x="115" y="91" width="1" height="4" fill="#800000"/><rect x="115" y="94" width="3" height="1" fill="#800000"/><rect x="117" y="88" width="1" height="7" fill="#800000"/><rect x="117" y="88" width="4" height="1" fill="#800000"/><rect x="120" y="82" width="1" height="10" fill="#800000"/><rect x="120" y="82" width="3" height="1" fill="#800000"/><rect x="122" y="82" width="1" height="7" fill="#800000"/><rect x="122" y="88" width="3" height="1" fill="#800000"/><rect x="124" y="84" width="1" height="5" fill="#800000"/><rect x="123" y="92" width="1" height="1" fill="#000"/><rect x="124" y="92" width="1" height="1" fill="#000"/><rect x="122" y="93" width="1" height="1" fill="#000"/><rect x="125" y="93" width="1" height="1" fill="#000"/><rect x="123" y="94" width="1" height="1" fill="#000"/><rect x="124" y="94" width="1" height="1" fill="#000"/><rect x="125" y="94" width="1" height="1" fill="#000"/><rect x="125" y="95" width="1" height="1" fill="#000"/><rect x="123" y="96" width="1" height="1" fill="#000"/><rect x="124" y="96" width="1" height="1" fill="#000"/></svg><svg class="ic" style="left:138px;top:7px" width="7" height="14" viewBox="138 82 7 14" shape-rendering="crispEdges"><rect x="141" y="82" width="1" height="14" fill="#000"/><rect x="139.5" y="85.5" width="4" height="8" fill="#fff" stroke="#000" stroke-width="1.2"/></svg><svg class="ic" style="left:153px;top:13px" width="5" height="3" viewBox="153 88 5 3" shape-rendering="crispEdges"><rect x="153" y="88" width="5" height="1" fill="#000"/><rect x="154" y="89" width="3" height="1" fill="#000"/><rect x="155" y="90" width="1" height="1" fill="#000"/></svg><i class="pr" style="left:162px;top:3px;width:21px;height:20px"></i><svg class="ic" style="left:165px;top:6px" width="17" height="17" viewBox="165 81 17 17" shape-rendering="crispEdges"><rect x="168" y="82" width="3" height="1" fill="#800000"/><rect x="168" y="83" width="1" height="1" fill="#800000"/><rect x="171" y="83" width="9" height="1" fill="#800000"/><rect x="168" y="84" width="1" height="1" fill="#800000"/><rect x="171" y="84" width="1" height="1" fill="#800000"/><rect x="179" y="84" width="1" height="1" fill="#800000"/><rect x="166" y="85" width="2" height="1" fill="#800000"/><rect x="171" y="85" width="1" height="1" fill="#800000"/><rect x="179" y="85" width="1" height="1" fill="#800000"/><rect x="166" y="86" width="1" height="1" fill="#800000"/><rect x="171" y="86" width="1" height="1" fill="#800000"/><rect x="175" y="86" width="2" height="1" fill="#800000"/><rect x="179" y="86" width="1" height="1" fill="#800000"/><rect x="166" y="87" width="1" height="1" fill="#800000"/><rect x="171" y="87" width="1" height="1" fill="#800000"/><rect x="175" y="87" width="2" height="1" fill="#800000"/><rect x="179" y="87" width="1" height="1" fill="#800000"/><rect x="167" y="88" width="2" height="1" fill="#800000"/><rect x="170" y="88" width="1" height="1" fill="#800000"/><rect x="172" y="88" width="1" height="1" fill="#800000"/><rect x="178" y="88" width="1" height="1" fill="#800000"/><rect x="167" y="89" width="1" height="1" fill="#800000"/><rect x="170" y="89" width="1" height="1" fill="#800000"/><rect x="172" y="89" width="2" height="1" fill="#800000"/><rect x="178" y="89" width="1" height="1" fill="#800000"/><rect x="166" y="90" width="1" height="1" fill="#800000"/><rect x="170" y="90" width="1" height="1" fill="#800000"/><rect x="173" y="90" width="1" height="1" fill="#800000"/><rect x="177" y="90" width="1" height="1" fill="#800000"/><rect x="166" y="91" width="1" height="1" fill="#800000"/><rect x="170" y="91" width="4" height="1" fill="#800000"/><rect x="177" y="91" width="1" height="1" fill="#800000"/><rect x="166" y="92" width="2" height="1" fill="#800000"/><rect x="171" y="92" width="1" height="1" fill="#800000"/><rect x="178" y="92" width="1" height="1" fill="#800000"/><rect x="168" y="93" width="1" height="1" fill="#800000"/><rect x="171" y="93" width="1" height="1" fill="#800000"/><rect x="179" y="93" width="1" height="1" fill="#800000"/><rect x="168" y="94" width="1" height="1" fill="#800000"/><rect x="170" y="94" width="1" height="1" fill="#800000"/><rect x="174" y="94" width="2" height="1" fill="#800000"/><rect x="179" y="94" width="1" height="1" fill="#800000"/><rect x="168" y="95" width="1" height="1" fill="#800000"/><rect x="170" y="95" width="1" height="1" fill="#800000"/><rect x="173" y="95" width="1" height="1" fill="#800000"/><rect x="176" y="95" width="1" height="1" fill="#800000"/><rect x="179" y="95" width="1" height="1" fill="#800000"/><rect x="168" y="96" width="6" height="1" fill="#800000"/><rect x="177" y="96" width="3" height="1" fill="#800000"/></svg><i class="pr" style="left:185px;top:3px;width:21px;height:20px"></i><svg class="ic" style="left:188px;top:6px" width="18" height="17" viewBox="188 81 18 17" shape-rendering="crispEdges"><rect x="190" y="82" width="1" height="16" fill="#800000"/><rect x="189" y="96" width="16" height="1" fill="#800000"/><rect x="191" y="82" width="1" height="1" fill="#ff00ff"/><rect x="191" y="83" width="3" height="1" fill="#ff00ff"/><rect x="191" y="84" width="7" height="1" fill="#ff00ff"/><rect x="191" y="85" width="6" height="1" fill="#ff00ff"/><rect x="191" y="86" width="5" height="1" fill="#ff00ff"/><rect x="191" y="87" width="10" height="1" fill="#ff00ff"/><rect x="191" y="88" width="14" height="1" fill="#ff00ff"/><rect x="191" y="89" width="12" height="1" fill="#008080"/><rect x="191" y="90" width="10" height="1" fill="#008080"/><rect x="191" y="91" width="7" height="1" fill="#008080"/><rect x="191" y="92" width="4" height="1" fill="#008080"/><rect x="191" y="93" width="6" height="1" fill="#008080"/><rect x="191" y="94" width="2" height="1" fill="#008080"/></svg><i class="sep" style="left:210px;top:3px;"></i><svg class="ic" style="left:216px;top:5px" width="17" height="17" viewBox="216 80 17 17"><rect x="217" y="81" width="3" height="15" fill="#000"/><rect x="218" y="82" width="1" height="13" fill="#808000"/><path d="M220.5 88.5L231.5 82V95Z" fill="#808000" stroke="#000" stroke-width="1" shape-rendering="auto"/></svg><svg class="ic" style="left:239px;top:5px" width="17" height="17" viewBox="239 80 17 17"><rect x="252" y="81" width="3" height="15" fill="#000"/><rect x="253" y="82" width="1" height="13" fill="#808000"/><path d="M251.5 88.5L240.5 82V95Z" fill="#808000" stroke="#000" stroke-width="1" shape-rendering="auto"/></svg><svg class="ic" style="left:263px;top:5px" width="17" height="17" viewBox="263 80 17 17"><path d="M264 88.5L278 81.3V88.5Z" fill="#fafafa" stroke="none" stroke-width="1" shape-rendering="auto"/><path d="M272 88.5L278.4 81.3V95.7Z" fill="#858585" stroke="none" stroke-width="1" shape-rendering="auto"/><path d="M263.6 88.6L272.4 88.4L278.4 95.9Z" fill="#000" stroke="none" stroke-width="1" shape-rendering="auto"/></svg><svg class="ic" style="left:286px;top:5px" width="17" height="17" viewBox="286 80 17 17"><path d="M301.5 88.5L287.5 81.3V88.5Z" fill="#fafafa" stroke="none" stroke-width="1" shape-rendering="auto"/><path d="M293.5 88.5L287.1 81.3V95.7Z" fill="#858585" stroke="none" stroke-width="1" shape-rendering="auto"/><path d="M301.9 88.6L293.1 88.4L287.1 95.9Z" fill="#000" stroke="none" stroke-width="1" shape-rendering="auto"/></svg><svg class="ic" style="left:308px;top:5px" width="18" height="18" viewBox="308 80 18 18"><path d="M309.3 88.5L316.5 81.3L323.7 88.5L316.5 95.7Z" fill="#ffff00" stroke="#000" stroke-width="1" shape-rendering="auto"/><line x1="312.5" y1="88.5" x2="321.0" y2="88.5" stroke="#000" stroke-width="1.3" stroke-linecap="butt" shape-rendering="auto"/><path d="M314.5 86.0L312.0 88.5L314.5 91.0" fill="none" stroke="#000" stroke-width="1.3" shape-rendering="auto"/></svg><svg class="ic" style="left:331px;top:5px" width="18" height="18" viewBox="331 80 18 18"><path d="M332.3 88.5L339.5 81.3L346.7 88.5L339.5 95.7Z" fill="#ffff00" stroke="#000" stroke-width="1" shape-rendering="auto"/><line x1="335.0" y1="88.5" x2="343.5" y2="88.5" stroke="#000" stroke-width="1.3" stroke-linecap="butt" shape-rendering="auto"/><path d="M341.5 86.0L344.0 88.5L341.5 91.0" fill="none" stroke="#000" stroke-width="1.3" shape-rendering="auto"/></svg><svg class="ic" style="left:354px;top:5px" width="18" height="18" viewBox="354 80 18 18"><path d="M355.3 88.5L362.5 81.3L369.7 88.5L362.5 95.7Z" fill="#ffff00" stroke="#000" stroke-width="1" shape-rendering="auto"/><line x1="362.5" y1="83.5" x2="362.5" y2="93.5" stroke="#c8c8a0" stroke-width="1" stroke-linecap="butt" shape-rendering="auto"/><line x1="358.5" y1="88.5" x2="366.5" y2="88.5" stroke="#000" stroke-width="1.3" stroke-linecap="butt" shape-rendering="auto"/><path d="M360.5 86.0L358.0 88.5L360.5 91.0Z M364.5 86.0L367.0 88.5L364.5 91.0Z" fill="#000" stroke="#000" stroke-width="1" shape-rendering="auto"/></svg><svg class="ic" style="left:377px;top:5px" width="18" height="18" viewBox="377 80 18 18"><path d="M378.3 88.5L385.5 81.3L392.7 88.5L385.5 95.7Z" fill="#ffff00" stroke="#000" stroke-width="1" shape-rendering="auto"/><line x1="385.5" y1="83.5" x2="385.5" y2="93.5" stroke="#c8c8a0" stroke-width="1" stroke-linecap="butt" shape-rendering="auto"/><line x1="380.0" y1="88.5" x2="391.0" y2="88.5" stroke="#000" stroke-width="1.2" stroke-linecap="butt" shape-rendering="auto"/><path d="M382.0 86.0L384.5 88.5L382.0 91.0Z M389.0 86.0L386.5 88.5L389.0 91.0Z" fill="#000" stroke="#000" stroke-width="1" shape-rendering="auto"/></svg><svg class="ic" style="left:400px;top:5px" width="18" height="18" viewBox="400 80 18 18"><path d="M401.3 88.5L408.5 81.3L415.7 88.5L408.5 95.7Z" fill="#ffff00" stroke="#000" stroke-width="1" shape-rendering="auto"/><line x1="403.0" y1="88.5" x2="414.0" y2="88.5" stroke="#000" stroke-width="1.2" stroke-linecap="butt" shape-rendering="auto"/><line x1="408.5" y1="83.0" x2="408.5" y2="94.0" stroke="#000" stroke-width="1.2" stroke-linecap="butt" shape-rendering="auto"/><path d="M406.5 85.0L408.5 87.5L410.5 85.0 M406.5 92.0L408.5 89.5L410.5 92.0" fill="none" stroke="#000" stroke-width="1.4" shape-rendering="auto"/></svg><svg class="ic" style="left:423px;top:5px" width="18" height="18" viewBox="423 80 18 18"><path d="M424.3 88.5L431.5 81.3L438.7 88.5L431.5 95.7Z" fill="#ffff00" stroke="#000" stroke-width="1" shape-rendering="auto"/><line x1="426.0" y1="88.5" x2="437.0" y2="88.5" stroke="#000" stroke-width="1.2" stroke-linecap="butt" shape-rendering="auto"/><line x1="431.5" y1="84.0" x2="431.5" y2="93.0" stroke="#000" stroke-width="1.2" stroke-linecap="butt" shape-rendering="auto"/><path d="M429.3 86.0L431.5 83.5L433.7 86.0Z M429.3 91.0L431.5 93.5L433.7 91.0Z" fill="#000" stroke="#000" stroke-width="1" shape-rendering="auto"/></svg><i class="sep" style="left:446px;top:3px;"></i><svg class="ic" style="left:453px;top:5px" width="16" height="17" viewBox="453 80 16 17"><path d="M457.5 96L454.6 90.2Q453.8 88.4 455 87.8Q456.2 87.4 457 88.8L458.6 91.4V83Q458.7 81.4 459.7 81.4Q460.8 81.4 460.9 83V87.5V84.3Q461 83 462 83Q463 83 463.1 84.3V88V85.8Q463.2 84.7 464.1 84.7Q465 84.7 465.1 85.8V89V87.4Q465.3 86.4 466.1 86.5Q467 86.6 467 87.6V91.5Q467 93.5 465.8 94.5L464.3 96" fill="#f0f0f0" stroke="#000" stroke-width="1.1" shape-rendering="auto" stroke-linejoin="round"/></svg><i class="pr" style="left:473px;top:3px;width:21px;height:20px"></i><svg class="ic" style="left:478px;top:8px" width="13" height="14" viewBox="478 83 13 14" shape-rendering="crispEdges"><rect x="478" y="89" width="13" height="1" fill="#000"/><rect x="484" y="83" width="1" height="14" fill="#000"/></svg><svg class="ic" style="left:498px;top:6px" width="18" height="16" viewBox="498 81 18 16"><path d="M499.3 85L503.2 93.2L509.5 84.6L514.8 91.8" fill="none" stroke="#000" stroke-width="1.1" shape-rendering="auto"/><circle cx="503.3" cy="93" r="2" fill="none" stroke="#ff0000" stroke-width="1.2" shape-rendering="auto"/><circle cx="509.5" cy="84.5" r="2" fill="none" stroke="#ff0000" stroke-width="1.2" shape-rendering="auto"/></svg><svg class="ic" style="left:521px;top:5px" width="18" height="18" viewBox="521 80 18 18" shape-rendering="crispEdges"><rect x="525" y="81" width="4" height="1" fill="#800080"/><rect x="530" y="81" width="4" height="1" fill="#800080"/><rect x="522" y="82" width="3" height="1" fill="#800080"/><rect x="529" y="82" width="1" height="1" fill="#800080"/><rect x="534" y="82" width="3" height="1" fill="#800080"/><rect x="522" y="83" width="1" height="1" fill="#800080"/><rect x="536" y="83" width="1" height="1" fill="#800080"/><rect x="522" y="84" width="1" height="1" fill="#800080"/><rect x="536" y="84" width="1" height="1" fill="#800080"/><rect x="522" y="85" width="1" height="1" fill="#800080"/><rect x="536" y="85" width="1" height="1" fill="#800080"/><rect x="523" y="86" width="3" height="1" fill="#800080"/><rect x="528" y="86" width="3" height="1" fill="#800080"/><rect x="533" y="86" width="3" height="1" fill="#800080"/><rect x="523" y="87" width="1" height="1" fill="#800080"/><rect x="526" y="87" width="3" height="1" fill="#800080"/><rect x="531" y="87" width="2" height="1" fill="#800080"/><rect x="535" y="87" width="1" height="1" fill="#800080"/><rect x="523" y="88" width="1" height="1" fill="#800080"/><rect x="535" y="88" width="1" height="1" fill="#800080"/><rect x="523" y="89" width="4" height="1" fill="#800080"/><rect x="529" y="89" width="3" height="1" fill="#800080"/><rect x="535" y="89" width="1" height="1" fill="#800080"/><rect x="526" y="90" width="1" height="1" fill="#800080"/><rect x="529" y="90" width="3" height="1" fill="#800080"/><rect x="535" y="90" width="1" height="1" fill="#800080"/><rect x="526" y="91" width="1" height="1" fill="#800080"/><rect x="529" y="91" width="1" height="1" fill="#800080"/><rect x="535" y="91" width="1" height="1" fill="#800080"/><rect x="526" y="92" width="1" height="1" fill="#800080"/><rect x="529" y="92" width="1" height="1" fill="#800080"/><rect x="534" y="92" width="2" height="1" fill="#800080"/><rect x="526" y="93" width="1" height="1" fill="#800080"/><rect x="529" y="93" width="6" height="1" fill="#800080"/><rect x="526" y="94" width="1" height="1" fill="#800080"/><rect x="529" y="94" width="1" height="1" fill="#800080"/><rect x="526" y="95" width="4" height="1" fill="#800080"/></svg><i class="pr" style="left:542px;top:3px;width:21px;height:20px"></i><svg class="ic" style="left:545px;top:5px" width="18" height="18" viewBox="545 80 18 18" shape-rendering="crispEdges"><rect x="549" y="82" width="2" height="1" fill="#008080"/><rect x="553" y="82" width="5" height="1" fill="#008080"/><rect x="548" y="83" width="1" height="1" fill="#008080"/><rect x="551" y="83" width="1" height="1" fill="#008080"/><rect x="553" y="83" width="1" height="1" fill="#008080"/><rect x="555" y="83" width="1" height="1" fill="#008080"/><rect x="558" y="83" width="1" height="1" fill="#008080"/><rect x="547" y="84" width="1" height="1" fill="#008080"/><rect x="551" y="84" width="1" height="1" fill="#008080"/><rect x="553" y="84" width="1" height="1" fill="#008080"/><rect x="556" y="84" width="1" height="1" fill="#008080"/><rect x="559" y="84" width="1" height="1" fill="#008080"/><rect x="546" y="85" width="2" height="1" fill="#008080"/><rect x="552" y="85" width="2" height="1" fill="#008080"/><rect x="557" y="85" width="1" height="1" fill="#008080"/><rect x="559" y="85" width="1" height="1" fill="#008080"/><rect x="546" y="86" width="1" height="1" fill="#008080"/><rect x="550" y="86" width="1" height="1" fill="#008080"/><rect x="552" y="86" width="1" height="1" fill="#008080"/><rect x="557" y="86" width="2" height="1" fill="#008080"/><rect x="560" y="86" width="1" height="1" fill="#008080"/><rect x="546" y="87" width="1" height="1" fill="#008080"/><rect x="556" y="87" width="4" height="1" fill="#008080"/><rect x="560" y="87" width="1" height="1" fill="#008080"/><rect x="546" y="88" width="1" height="1" fill="#008080"/><rect x="553" y="88" width="2" height="1" fill="#008080"/><rect x="560" y="88" width="1" height="1" fill="#008080"/><rect x="547" y="89" width="2" height="1" fill="#008080"/><rect x="552" y="89" width="1" height="1" fill="#008080"/><rect x="556" y="89" width="2" height="1" fill="#008080"/><rect x="559" y="89" width="1" height="1" fill="#008080"/><rect x="546" y="90" width="2" height="1" fill="#008080"/><rect x="552" y="90" width="1" height="1" fill="#008080"/><rect x="558" y="90" width="1" height="1" fill="#008080"/><rect x="546" y="91" width="1" height="1" fill="#008080"/><rect x="553" y="91" width="2" height="1" fill="#008080"/><rect x="558" y="91" width="1" height="1" fill="#008080"/><rect x="546" y="92" width="7" height="1" fill="#008080"/><rect x="557" y="92" width="1" height="1" fill="#008080"/><rect x="559" y="92" width="2" height="1" fill="#008080"/><rect x="546" y="93" width="1" height="1" fill="#008080"/><rect x="552" y="93" width="1" height="1" fill="#008080"/><rect x="560" y="93" width="1" height="1" fill="#008080"/><rect x="546" y="94" width="1" height="1" fill="#008080"/><rect x="551" y="94" width="2" height="1" fill="#008080"/><rect x="560" y="94" width="1" height="1" fill="#008080"/><rect x="546" y="95" width="5" height="1" fill="#008080"/><rect x="553" y="95" width="4" height="1" fill="#008080"/><rect x="559" y="95" width="1" height="1" fill="#008080"/><rect x="557" y="96" width="2" height="1" fill="#008080"/></svg><i class="sep" style="left:567px;top:3px;"></i><svg class="ic" style="left:574px;top:5px" width="16" height="18" viewBox="574 80 16 18" shape-rendering="crispEdges"><rect x="576" y="95" width="13" height="2" fill="#000"/><rect x="588" y="85" width="1" height="11" fill="#000"/><rect x="575.5" y="84.5" width="12" height="11" fill="#fff" stroke="#808080" stroke-width="1"/><path d="M576 87V85.5L577.5 84H585.5L587 85.5V87Z" fill="#00d8d8" stroke="none" stroke-width="0"/><rect x="577.5" y="81.5" width="2" height="2" fill="#fff" stroke="#606060" stroke-width="1"/><rect x="584.5" y="81.5" width="2" height="2" fill="#fff" stroke="#606060" stroke-width="1"/><text x="581.6" y="94" font-family="Liberation Sans,sans-serif" font-size="9" font-weight="bold" text-anchor="middle" fill="#ff0000" shape-rendering="auto" textLength="9.5" lengthAdjust="spacingAndGlyphs">21</text></svg><svg class="ic" style="left:597px;top:6px" width="16" height="16" viewBox="597 81 16 16" shape-rendering="crispEdges"><rect x="597" y="81" width="16" height="16" fill="#008080"/><rect x="598" y="82" width="1" height="13" fill="#00ffff"/><rect x="599" y="81" width="13" height="1" fill="#00c0c0"/><rect x="599" y="95" width="14" height="2" fill="#000080"/><rect x="600" y="83" width="11" height="12" fill="#101010"/><rect x="601" y="84" width="9" height="3" fill="#c0c0c0"/><rect x="612" y="82" width="1" height="14" fill="#000"/><rect x="601" y="88" width="2" height="1" fill="#00e0e0"/><rect x="604" y="88" width="2" height="1" fill="#00e0e0"/><rect x="607" y="88" width="2" height="1" fill="#00e0e0"/><rect x="609" y="88" width="1" height="1" fill="#fff"/><rect x="601" y="91" width="2" height="1" fill="#00e0e0"/><rect x="604" y="91" width="2" height="1" fill="#00e0e0"/><rect x="607" y="91" width="2" height="1" fill="#00e0e0"/><rect x="609" y="91" width="1" height="1" fill="#fff"/><rect x="601" y="93" width="2" height="1" fill="#fff"/><rect x="604" y="93" width="2" height="1" fill="#fff"/><rect x="607" y="93" width="2" height="1" fill="#fff"/><rect x="609" y="93" width="1" height="1" fill="#fff"/></svg><svg class="ic" style="left:620px;top:6px" width="16" height="16" viewBox="620 81 16 16" shape-rendering="crispEdges"><rect x="620" y="81" width="16" height="16" fill="#000"/><rect x="623" y="82" width="11" height="13" fill="#fff"/><path d="M634 91L630 95H634Z" fill="#000" stroke="none" stroke-width="0"/><path d="M630 91H634L630 95Z" fill="#c0c0c0" stroke="none" stroke-width="0"/><rect x="625" y="83" width="7" height="1" fill="#0000ff"/><rect x="625" y="85" width="7" height="1" fill="#0000ff"/><rect x="625" y="87" width="7" height="1" fill="#0000ff"/><rect x="625" y="89" width="7" height="1" fill="#0000ff"/><rect x="625" y="91" width="4" height="1" fill="#0000ff"/><rect x="621" y="83" width="1" height="1" fill="#fff"/><rect x="621" y="86" width="1" height="1" fill="#fff"/><rect x="621" y="89" width="1" height="1" fill="#fff"/><rect x="621" y="92" width="1" height="1" fill="#fff"/></svg><svg class="ic" style="left:643px;top:7px" width="16" height="14" viewBox="643 82 16 14" shape-rendering="crispEdges"><rect x="643" y="82" width="16" height="14" fill="#000"/><rect x="644" y="83" width="14" height="12" fill="#ff0000"/><rect x="647" y="83" width="11" height="9" fill="#000"/><rect x="648" y="84" width="9" height="6" fill="#7fffff"/><path d="M657 86V90H652Z" fill="#008000" stroke="none" stroke-width="0"/><rect x="648" y="90" width="9" height="1" fill="#0000ff"/><rect x="649" y="85" width="1" height="1" fill="#ffff00"/><rect x="647" y="92" width="6" height="3" fill="#fff"/><rect x="649" y="93" width="2" height="2" fill="#000"/><rect x="653" y="92" width="2" height="3" fill="#000"/><rect x="644" y="83" width="1" height="1" fill="#fff"/></svg><svg class="ic" style="left:665px;top:5px" width="18" height="18" viewBox="665 80 18 18" shape-rendering="crispEdges"><rect x="670.5" y="81.5" width="8" height="7" fill="#fff" stroke="#000" stroke-width="1"/><rect x="671" y="82" width="7" height="2" fill="#000080"/><rect x="666.5" y="84.5" width="8" height="7" fill="#fff" stroke="#000" stroke-width="1"/><rect x="667" y="85" width="7" height="2" fill="#000080"/><rect x="668" y="88" width="1" height="1" fill="#000"/><rect x="668" y="90" width="1" height="1" fill="#000"/><rect x="676" y="85" width="1" height="1" fill="#000"/><circle cx="676.6" cy="91.9" r="4.6" fill="#00e0e0" stroke="#000" stroke-width="1.1" shape-rendering="auto"/><path d="M674 91L677 89.5L679.5 90.5L677.5 93L678 95.5L675.5 95Z" fill="#b0a000" stroke="none" stroke-width="0" shape-rendering="auto"/></svg><svg class="ic" style="left:688px;top:5px" width="18" height="18" viewBox="688 80 18 18" shape-rendering="crispEdges"><rect x="694.5" y="81.5" width="9" height="8" fill="#c0c0a0" stroke="#808040" stroke-width="1.6"/><rect x="696" y="83" width="6" height="5" fill="#0000e0"/><rect x="696" y="83" width="6" height="1" fill="#000080"/><rect x="694" y="90" width="11" height="4" fill="#a0a080"/><rect x="693" y="91" width="12" height="1" fill="#606040"/><rect x="697" y="94" width="8" height="2" fill="#000"/><rect x="699" y="92" width="2" height="1" fill="#008000"/><rect x="690.5" y="86.5" width="5" height="10" fill="#fff" stroke="#707050" stroke-width="1"/><rect x="691" y="88" width="4" height="3" fill="#0000e0"/><rect x="691" y="91" width="2" height="2" fill="#ff0000"/><path d="M689.5 85.5L692 83L694.5 85.5" fill="none" stroke="#000" stroke-width="1" shape-rendering="auto"/></svg></div>
<div id="tb3" class="tb"><i class="grip" style="left:4px;top:4px;height:19px"></i><i class="bandsep" style="left:446px"></i><i class="grip" style="left:451px;top:4px;height:19px"></i><i class="bandsep" style="left:663px"></i><i class="grip" style="left:668px;top:4px;height:19px"></i><svg class="ic" style="left:10px;top:5px" width="18" height="18" viewBox="10 106 18 18"><g transform="translate(11,107) scale(1.0,1.0)" shape-rendering="auto"><path d="M9 2L11 -.2L15.2 .3V10.2L7.5 13.6L3.4 15.4L5.2 10.8Z" fill="#fff" stroke="#fff" stroke-width="1.6" shape-rendering="auto"/><path d="M8.6 3L14.9 8.4L14.6 10.2L7.8 12.8L5.9 11.6L6.2 8Z" fill="#999" stroke="none" stroke-width="1" shape-rendering="auto"/><path d="M9.5 4.5L13.5 8M8.3 6L12.6 9.6M7.3 8L11 10.8M9.5 6.2L8 10.5M11.6 7.5L10.2 11.4" fill="none" stroke="#fff" stroke-width="0.9" shape-rendering="auto"/><path d="M9 2.3L11 0L12.8 .2L13 1.4L15 .7V7.6Z" fill="#ff0000" stroke="none" stroke-width="1" shape-rendering="auto"/><path d="M9 2.2L15.1 8" fill="none" stroke="#000" stroke-width="1.4" shape-rendering="auto"/><path d="M9.2 2L5.2 11L3.6 15.2" fill="none" stroke="#000" stroke-width="1.3" shape-rendering="auto"/><path d="M15.1 7.5V10L7.6 13.5L3.6 15.4" fill="none" stroke="#000" stroke-width="1.3" shape-rendering="auto"/><path d="M5.2 11.4L6.6 11L8.2 12.6L5.6 14.2L4.2 14.2Z" fill="#ff0000" stroke="none" stroke-width="1" shape-rendering="auto"/></g><path d="M11 119.2L14.3 122.4" fill="none" stroke="#000" stroke-width="1.1" shape-rendering="auto"/></svg><svg class="ic" style="left:35px;top:7px" width="15" height="14" viewBox="35 108 15 14" shape-rendering="crispEdges"><rect x="35" y="114" width="14" height="1" fill="#000"/><rect x="36" y="109" width="1" height="12" fill="#000"/><rect x="40" y="109" width="1" height="12" fill="#000"/><rect x="44" y="109" width="1" height="12" fill="#000"/></svg><svg class="ic" style="left:57px;top:5px" width="17" height="17" viewBox="57 106 17 17" shape-rendering="crispEdges"><rect x="57" y="109" width="16" height="1" fill="#000"/><rect x="59" y="107" width="1" height="6" fill="#000"/><rect x="63" y="107" width="1" height="6" fill="#000"/><rect x="67" y="107" width="1" height="6" fill="#000"/><rect x="71" y="107" width="1" height="6" fill="#000"/><text class="cj" x="59.6" y="121.2" font-size="10.5" fill="#808000" stroke="#808000" stroke-width="0.13" shape-rendering="auto">金</text></svg><svg class="ic" style="left:80px;top:5px" width="17" height="17" viewBox="80 106 17 17" shape-rendering="crispEdges"><rect x="80" y="109" width="16" height="1" fill="#000"/><rect x="82" y="107" width="1" height="6" fill="#000"/><rect x="86" y="107" width="1" height="6" fill="#000"/><rect x="90" y="107" width="1" height="6" fill="#000"/><rect x="94" y="107" width="1" height="6" fill="#000"/><text class="cj" x="82.6" y="121.2" font-size="10.5" fill="#808000" stroke="#808000" stroke-width="0.13" shape-rendering="auto">金</text></svg><svg class="ic" style="left:103px;top:5px" width="17" height="17" viewBox="103 106 17 17" shape-rendering="crispEdges"><rect x="103" y="109" width="16" height="1" fill="#000"/><rect x="104" y="107" width="1" height="5" fill="#000"/><rect x="108" y="107" width="1" height="5" fill="#000"/><rect x="112" y="107" width="1" height="5" fill="#000"/><rect x="117" y="107" width="1" height="5" fill="#000"/><rect x="108" y="113" width="1" height="8" fill="#000"/><rect x="108" y="113" width="6" height="1" fill="#000"/><rect x="108" y="116" width="5" height="1" fill="#000"/></svg><svg class="ic" style="left:126px;top:5px" width="17" height="18" viewBox="126 106 17 18" shape-rendering="crispEdges"><rect x="126" y="109" width="16" height="1" fill="#000"/><rect x="128" y="107" width="1" height="5" fill="#000"/><rect x="132" y="107" width="1" height="5" fill="#000"/><rect x="136" y="107" width="1" height="5" fill="#000"/><rect x="140" y="107" width="1" height="5" fill="#000"/><path d="M130 113.5H136Q141 114 140.3 117.5Q139.5 122.3 133.5 122.2Q129 122 129.6 119Q130.3 116.2 134.4 116.6Q137 117.2 135.4 119.2" fill="none" stroke="#000" stroke-width="1.1" shape-rendering="auto"/></svg><svg class="ic" style="left:148px;top:4px" width="18" height="19" viewBox="148 105 18 19" shape-rendering="crispEdges"><g transform="translate(149,107) scale(1.0,0.68)" shape-rendering="auto"><path d="M9 2L11 -.2L15.2 .3V10.2L7.5 13.6L3.4 15.4L5.2 10.8Z" fill="#fff" stroke="#fff" stroke-width="1.6" shape-rendering="auto"/><path d="M8.6 3L14.9 8.4L14.6 10.2L7.8 12.8L5.9 11.6L6.2 8Z" fill="#999" stroke="none" stroke-width="1" shape-rendering="auto"/><path d="M9.5 4.5L13.5 8M8.3 6L12.6 9.6M7.3 8L11 10.8M9.5 6.2L8 10.5M11.6 7.5L10.2 11.4" fill="none" stroke="#fff" stroke-width="0.9" shape-rendering="auto"/><path d="M9 2.3L11 0L12.8 .2L13 1.4L15 .7V7.6Z" fill="#ff0000" stroke="none" stroke-width="1" shape-rendering="auto"/><path d="M9 2.2L15.1 8" fill="none" stroke="#000" stroke-width="1.4" shape-rendering="auto"/><path d="M9.2 2L5.2 11L3.6 15.2" fill="none" stroke="#000" stroke-width="1.3" shape-rendering="auto"/><path d="M15.1 7.5V10L7.6 13.5L3.6 15.4" fill="none" stroke="#000" stroke-width="1.3" shape-rendering="auto"/><path d="M5.2 11.4L6.6 11L8.2 12.6L5.6 14.2L4.2 14.2Z" fill="#ff0000" stroke="none" stroke-width="1" shape-rendering="auto"/></g><rect x="149" y="120" width="16" height="1" fill="#000"/><rect x="149" y="118" width="1" height="5" fill="#000"/><rect x="155" y="118" width="1" height="5" fill="#000"/><rect x="158" y="119" width="1" height="3" fill="#000"/><rect x="160" y="119" width="1" height="3" fill="#000"/><rect x="162" y="118" width="1" height="5" fill="#000"/></svg><svg class="ic" style="left:171px;top:5px" width="18" height="18" viewBox="171 106 18 18" shape-rendering="crispEdges"><circle cx="180" cy="114.7" r="7.4" fill="none" stroke="#000" stroke-width="1.1" shape-rendering="auto"/><rect x="172" y="114" width="16" height="1" fill="#000"/><rect x="175" y="112" width="1" height="5" fill="#000"/><rect x="177" y="112" width="1" height="5" fill="#000"/><rect x="179" y="112" width="1" height="5" fill="#000"/><rect x="181" y="112" width="1" height="5" fill="#000"/><rect x="183" y="112" width="1" height="5" fill="#000"/><rect x="185" y="112" width="1" height="5" fill="#000"/><line x1="183.5" y1="109.5" x2="187.5" y2="106.8" stroke="#000" stroke-width="1" stroke-linecap="butt" shape-rendering="auto"/></svg><svg class="ic" style="left:195px;top:7px" width="16" height="14" viewBox="195 108 16 14" shape-rendering="crispEdges"><rect x="195" y="114" width="16" height="1" fill="#000"/><rect x="197" y="109" width="1" height="12" fill="#000"/><rect x="200" y="109" width="1" height="12" fill="#000"/><rect x="204" y="109" width="1" height="12" fill="#000"/><rect x="208" y="109" width="1" height="12" fill="#000"/></svg><svg class="ic" style="left:218px;top:5px" width="17" height="18" viewBox="218 106 17 18" shape-rendering="crispEdges"><rect x="218" y="109" width="16" height="1" fill="#000"/><rect x="219" y="107" width="1" height="5" fill="#000"/><rect x="223" y="107" width="1" height="5" fill="#000"/><rect x="227" y="107" width="1" height="5" fill="#000"/><rect x="231" y="107" width="1" height="5" fill="#000"/><text x="220.3" y="122.4" font-family="Liberation Sans,sans-serif" font-size="13" fill="#000" shape-rendering="auto">n</text><text x="227.8" y="118.6" font-family="Liberation Sans,sans-serif" font-size="8.5" fill="#000" shape-rendering="auto">2</text></svg><svg class="ic" style="left:240px;top:5px" width="18" height="18" viewBox="240 106 18 18" shape-rendering="crispEdges"><rect x="248" y="107" width="1" height="16" fill="#808080"/><rect x="252" y="107" width="1" height="16" fill="#808080"/><rect x="256" y="107" width="1" height="16" fill="#808080"/><path d="M241.3 121.6L248.1 108.8L254.7 114.3Z" fill="none" stroke="#000" stroke-width="0.9" shape-rendering="auto"/></svg><svg class="ic" style="left:263px;top:5px" width="19" height="18" viewBox="263 106 19 18" shape-rendering="crispEdges"><path d="M279.5 112.5Q276 107.5 270.5 108Q264.5 109 264.8 115Q265.5 120.5 271 120.5Q274.5 120 274.3 116.8Q274 114 271.2 114Q269 114.4 269.2 116.4" fill="none" stroke="#000" stroke-width="1.1" shape-rendering="auto"/><rect x="264" y="116" width="17" height="1" fill="#ff0000"/><rect x="271" y="107" width="1" height="17" fill="#ff0000"/></svg><svg class="ic" style="left:286px;top:5px" width="18" height="18" viewBox="286 106 18 18" shape-rendering="crispEdges"><circle cx="294.5" cy="114.5" r="6.5" fill="none" stroke="#808080" stroke-width="1" shape-rendering="auto"/><circle cx="294.5" cy="114.5" r="4" fill="none" stroke="#808080" stroke-width="1" shape-rendering="auto"/><line x1="291.0" y1="111.0" x2="298.0" y2="118.0" stroke="#008080" stroke-width="1.5" stroke-linecap="butt" shape-rendering="auto"/><line x1="291.0" y1="118.0" x2="298.0" y2="111.0" stroke="#008080" stroke-width="1.5" stroke-linecap="butt" shape-rendering="auto"/><rect x="287.0" y="114.0" width="1" height="1" fill="#ff0000"/><rect x="294.0" y="107.0" width="1" height="1" fill="#ff0000"/><rect x="289.0" y="114.0" width="1" height="1" fill="#ff0000"/><rect x="294.0" y="109.0" width="1" height="1" fill="#ff0000"/><rect x="291.0" y="114.0" width="1" height="1" fill="#ff0000"/><rect x="294.0" y="111.0" width="1" height="1" fill="#ff0000"/><rect x="297.0" y="114.0" width="1" height="1" fill="#ff0000"/><rect x="294.0" y="117.0" width="1" height="1" fill="#ff0000"/><rect x="299.0" y="114.0" width="1" height="1" fill="#ff0000"/><rect x="294.0" y="119.0" width="1" height="1" fill="#ff0000"/><rect x="301.0" y="114.0" width="1" height="1" fill="#ff0000"/><rect x="294.0" y="121.0" width="1" height="1" fill="#ff0000"/><rect x="289.0" y="109.0" width="1" height="1" fill="#008080"/><rect x="299.0" y="109.0" width="1" height="1" fill="#008080"/><rect x="289.0" y="119.0" width="1" height="1" fill="#008080"/><rect x="299.0" y="119.0" width="1" height="1" fill="#008080"/><rect x="293.5" y="113.5" width="2" height="2" fill="#ff0000"/></svg><svg class="ic" style="left:309px;top:5px" width="18" height="18" viewBox="309 106 18 18" shape-rendering="crispEdges"><rect x="311.5" y="108.5" width="12" height="12" fill="none" stroke="#808080"/><rect x="313.5" y="110.5" width="8" height="8" fill="none" stroke="#808080"/><rect x="315.5" y="112.5" width="4" height="4" fill="none" stroke="#808080"/><rect x="310.0" y="114.0" width="1" height="1" fill="#008080"/><rect x="317.0" y="107.0" width="1" height="1" fill="#008080"/><rect x="312.0" y="114.0" width="1" height="1" fill="#008080"/><rect x="317.0" y="109.0" width="1" height="1" fill="#008080"/><rect x="314.0" y="114.0" width="1" height="1" fill="#008080"/><rect x="317.0" y="111.0" width="1" height="1" fill="#008080"/><rect x="320.0" y="114.0" width="1" height="1" fill="#008080"/><rect x="317.0" y="117.0" width="1" height="1" fill="#008080"/><rect x="322.0" y="114.0" width="1" height="1" fill="#008080"/><rect x="317.0" y="119.0" width="1" height="1" fill="#008080"/><rect x="324.0" y="114.0" width="1" height="1" fill="#008080"/><rect x="317.0" y="121.0" width="1" height="1" fill="#008080"/><rect x="310.0" y="107.0" width="1" height="1" fill="#ff0000"/><rect x="310.0" y="121.0" width="1" height="1" fill="#ff0000"/><rect x="324.0" y="107.0" width="1" height="1" fill="#ff0000"/><rect x="324.0" y="121.0" width="1" height="1" fill="#ff0000"/><rect x="312.0" y="109.0" width="1" height="1" fill="#ff0000"/><rect x="312.0" y="119.0" width="1" height="1" fill="#ff0000"/><rect x="322.0" y="109.0" width="1" height="1" fill="#ff0000"/><rect x="322.0" y="119.0" width="1" height="1" fill="#ff0000"/><rect x="314.0" y="111.0" width="1" height="1" fill="#ff0000"/><rect x="314.0" y="117.0" width="1" height="1" fill="#ff0000"/><rect x="320.0" y="111.0" width="1" height="1" fill="#ff0000"/><rect x="320.0" y="117.0" width="1" height="1" fill="#ff0000"/><rect x="316.0" y="113.0" width="1" height="1" fill="#ff0000"/><rect x="316.0" y="115.0" width="1" height="1" fill="#ff0000"/><rect x="318.0" y="113.0" width="1" height="1" fill="#ff0000"/><rect x="318.0" y="115.0" width="1" height="1" fill="#ff0000"/><rect x="317.0" y="114.0" width="1" height="1" fill="#ff0000"/></svg><svg class="ic" style="left:333px;top:6px" width="16" height="16" viewBox="333 107 16 16" shape-rendering="crispEdges"><rect x="334" y="108" width="1" height="14" fill="#000"/><rect x="341" y="108" width="1" height="14" fill="#000"/><line x1="334.5" y1="118" x2="341.5" y2="110.3" stroke="#000" stroke-width="1.1" stroke-linecap="butt" shape-rendering="auto"/><rect x="344" y="108" width="1" height="3" fill="#000"/><rect x="347" y="108" width="1" height="3" fill="#000"/></svg><svg class="ic" style="left:356px;top:5px" width="17" height="18" viewBox="356 106 17 18" shape-rendering="crispEdges"><rect x="356" y="110" width="16" height="1" fill="#000"/><rect x="356" y="107" width="1" height="7" fill="#000"/><rect x="371" y="107" width="1" height="7" fill="#000"/><rect x="359" y="107" width="1" height="4" fill="#000"/><rect x="364" y="107" width="1" height="4" fill="#000"/><text class="cj" x="358.4" y="121.8" font-size="11.5" fill="#ff0000" stroke="#ff0000" stroke-width="0.14" shape-rendering="auto">神</text></svg><svg class="ic" style="left:379px;top:5px" width="17" height="18" viewBox="379 106 17 18" shape-rendering="crispEdges"><rect x="379" y="110" width="16" height="1" fill="#000"/><rect x="379" y="107" width="1" height="7" fill="#000"/><rect x="394" y="107" width="1" height="7" fill="#000"/><rect x="382" y="107" width="1" height="4" fill="#000"/><rect x="387" y="107" width="1" height="4" fill="#000"/><text class="cj" x="381.4" y="121.8" font-size="11.5" fill="#ff0000" stroke="#ff0000" stroke-width="0.14" shape-rendering="auto">赢</text></svg><svg class="ic" style="left:402px;top:6px" width="17" height="17" viewBox="402 107 17 17" shape-rendering="crispEdges"><rect x="403" y="108" width="1" height="14" fill="#000"/><rect x="403" y="108" width="14" height="1" fill="#000"/><rect x="402" y="121" width="3" height="1" fill="#000"/><rect x="404" y="116" width="13" height="1" fill="#000"/><rect x="405" y="109" width="1" height="2" fill="#000"/><rect x="405" y="113" width="1" height="3" fill="#000"/><rect x="407" y="109" width="1" height="2" fill="#000"/><rect x="407" y="113" width="1" height="3" fill="#000"/><rect x="409" y="109" width="1" height="2" fill="#000"/><rect x="409" y="113" width="1" height="3" fill="#000"/><rect x="411" y="109" width="1" height="2" fill="#000"/><rect x="411" y="113" width="1" height="3" fill="#000"/><rect x="413" y="109" width="1" height="2" fill="#000"/><rect x="413" y="113" width="1" height="3" fill="#000"/><rect x="415" y="109" width="1" height="2" fill="#000"/><rect x="415" y="113" width="1" height="3" fill="#000"/><rect x="406" y="111" width="1" height="1" fill="#000"/><rect x="410" y="111" width="1" height="1" fill="#000"/><rect x="414" y="111" width="1" height="1" fill="#000"/><rect x="407" y="118" width="1" height="4" fill="#000"/><rect x="406" y="119" width="1" height="1" fill="#000"/><rect x="411" y="118" width="2" height="1" fill="#000"/><rect x="412" y="119" width="1" height="1" fill="#000"/><rect x="411" y="120" width="1" height="1" fill="#000"/><rect x="411" y="121" width="2" height="1" fill="#000"/><rect x="415" y="118" width="2" height="1" fill="#000"/><rect x="416" y="119" width="1" height="3" fill="#000"/><rect x="415" y="121" width="1" height="1" fill="#000"/><rect x="415" y="119.5" width="1" height="1" fill="#000"/></svg><svg class="ic" style="left:425px;top:6px" width="16" height="16" viewBox="425 107 16 16" shape-rendering="crispEdges"><rect x="425" y="109" width="1" height="10" fill="#000"/><rect x="432" y="107" width="1" height="16" fill="#000"/><rect x="439" y="109" width="1" height="10" fill="#000"/><rect x="425" y="113" width="15" height="1" fill="#000"/><rect x="427" y="112" width="2" height="3" fill="#000"/><rect x="429" y="111" width="1" height="1" fill="#000"/><rect x="429" y="115" width="1" height="1" fill="#000"/><rect x="436" y="112" width="2" height="3" fill="#000"/><rect x="435" y="111" width="1" height="1" fill="#000"/><rect x="435" y="115" width="1" height="1" fill="#000"/></svg><svg class="ic" style="left:458px;top:6px" width="16" height="16" viewBox="458 107 16 16" shape-rendering="crispEdges"><rect x="463.5" y="108.5" width="9" height="9" fill="none" stroke="#000" stroke-width="1.3"/><rect x="460" y="108" width="1" height="10" fill="#808080"/><rect x="458" y="108" width="5" height="1" fill="#808080"/><rect x="458" y="117" width="5" height="1" fill="#808080"/><rect x="459" y="110" width="3" height="1" fill="#808080"/><rect x="459" y="115" width="3" height="1" fill="#808080"/><rect x="463" y="120" width="10" height="1" fill="#808080"/><rect x="463" y="118" width="1" height="5" fill="#808080"/><rect x="472" y="118" width="1" height="5" fill="#808080"/><rect x="465" y="119" width="1" height="3" fill="#808080"/><rect x="470" y="119" width="1" height="3" fill="#808080"/></svg><svg class="ic" style="left:480px;top:5px" width="18" height="18" viewBox="480 106 18 18" shape-rendering="crispEdges"><line x1="482" y1="121.5" x2="484.4" y2="107" stroke="#800000" stroke-width="1" stroke-linecap="butt"/><line x1="482" y1="121.5" x2="489.5" y2="107" stroke="#ff0000" stroke-width="1" stroke-linecap="butt"/><line x1="482" y1="121.5" x2="496" y2="107.5" stroke="#000" stroke-width="1" stroke-linecap="butt"/><line x1="482" y1="121.5" x2="496.5" y2="114" stroke="#ff0000" stroke-width="1" stroke-linecap="butt"/><line x1="482" y1="121.5" x2="496.5" y2="119.5" stroke="#800000" stroke-width="1" stroke-linecap="butt"/><rect x="481" y="120" width="3" height="3" fill="#ff0000"/></svg><svg class="ic" style="left:503px;top:5px" width="18" height="18" viewBox="503 106 18 18" shape-rendering="crispEdges"><rect x="504.5" y="109.5" width="13" height="13" fill="none" stroke="#000" stroke-width="1.5"/><line x1="504.5" y1="122" x2="508" y2="107" stroke="#800080" stroke-width="1" stroke-linecap="butt"/><line x1="504.5" y1="122" x2="519.5" y2="118" stroke="#800080" stroke-width="1" stroke-linecap="butt"/><line x1="504.5" y1="122" x2="513.5" y2="107" stroke="#800000" stroke-width="1" stroke-linecap="butt"/><line x1="504.5" y1="122" x2="519.5" y2="113" stroke="#800000" stroke-width="1" stroke-linecap="butt"/><line x1="504.5" y1="122" x2="519.5" y2="107" stroke="#ff0000" stroke-width="1" stroke-linecap="butt"/></svg><svg class="ic" style="left:526px;top:5px" width="18" height="18" viewBox="526 106 18 18" shape-rendering="crispEdges"><rect x="527.5" y="107.5" width="13" height="13" fill="none" stroke="#000" stroke-width="1.5"/><line x1="527.5" y1="107.5" x2="542.5" y2="112" stroke="#800080" stroke-width="1" stroke-linecap="butt"/><line x1="527.5" y1="107.5" x2="532" y2="122.5" stroke="#800080" stroke-width="1" stroke-linecap="butt"/><line x1="527.5" y1="107.5" x2="542.5" y2="117" stroke="#800000" stroke-width="1" stroke-linecap="butt"/><line x1="527.5" y1="107.5" x2="537" y2="122.5" stroke="#800000" stroke-width="1" stroke-linecap="butt"/><line x1="527.5" y1="107.5" x2="542.5" y2="122.5" stroke="#ff0000" stroke-width="1" stroke-linecap="butt"/></svg><svg class="ic" style="left:549px;top:5px" width="18" height="18" viewBox="549 106 18 18" shape-rendering="crispEdges"><line x1="550.5" y1="122" x2="566" y2="107.5" stroke="#000" stroke-width="1" stroke-linecap="butt"/><line x1="550.5" y1="122" x2="566" y2="114.5" stroke="#000" stroke-width="1" stroke-linecap="butt"/><line x1="550.5" y1="122" x2="566" y2="118.5" stroke="#000" stroke-width="1" stroke-linecap="butt"/><path d="M550 122.5L554.5 120L553 122.5Z" fill="#000" stroke="none" stroke-width="0" shape-rendering="auto"/></svg><svg class="ic" style="left:572px;top:6px" width="18" height="16" viewBox="572 107 18 16" shape-rendering="crispEdges"><path d="M573.3 108.4L579.7 121.4L584.3 112.4L587.6 116.2" fill="none" stroke="#000" stroke-width="1.1" shape-rendering="auto"/><line x1="573" y1="121.5" x2="589" y2="121.5" stroke="#909090" stroke-dasharray="1 1"/></svg><svg class="ic" style="left:596px;top:6px" width="16" height="16" viewBox="596 107 16 16" shape-rendering="crispEdges"><rect x="596" y="107" width="15" height="15" fill="#fff"/><rect x="596" y="107" width="1" height="15" fill="#8a9a9a"/><rect x="600" y="107" width="1" height="15" fill="#8a9a9a"/><rect x="603" y="107" width="1" height="15" fill="#8a9a9a"/><rect x="606" y="107" width="1" height="15" fill="#8a9a9a"/><rect x="610" y="107" width="1" height="15" fill="#8a9a9a"/><rect x="596" y="107" width="15" height="1" fill="#8a9a9a"/><rect x="596" y="111" width="15" height="1" fill="#8a9a9a"/><rect x="596" y="114" width="15" height="1" fill="#8a9a9a"/><rect x="596" y="117" width="15" height="1" fill="#8a9a9a"/><rect x="596" y="121" width="15" height="1" fill="#8a9a9a"/><rect x="596" y="107" width="2" height="15" fill="#808080"/><path d="M603.5 111.5L606.5 114.5L603.5 117.5L600.5 114.5Z" fill="none" stroke="#fff" stroke-dasharray="1 1" shape-rendering="auto"/><rect x="599.8" y="106.8" width="1.4" height="1.4" fill="#ff0000" shape-rendering="auto"/><rect x="599.8" y="110.8" width="1.4" height="1.4" fill="#ff0000" shape-rendering="auto"/><rect x="599.8" y="113.8" width="1.4" height="1.4" fill="#ff0000" shape-rendering="auto"/><rect x="599.8" y="116.8" width="1.4" height="1.4" fill="#ff0000" shape-rendering="auto"/><rect x="599.8" y="120.8" width="1.4" height="1.4" fill="#ff0000" shape-rendering="auto"/><rect x="602.8" y="106.8" width="1.4" height="1.4" fill="#ff0000" shape-rendering="auto"/><rect x="602.8" y="110.8" width="1.4" height="1.4" fill="#ff0000" shape-rendering="auto"/><rect x="602.8" y="113.8" width="1.4" height="1.4" fill="#ff0000" shape-rendering="auto"/><rect x="602.8" y="116.8" width="1.4" height="1.4" fill="#ff0000" shape-rendering="auto"/><rect x="602.8" y="120.8" width="1.4" height="1.4" fill="#ff0000" shape-rendering="auto"/><rect x="605.8" y="106.8" width="1.4" height="1.4" fill="#ff0000" shape-rendering="auto"/><rect x="605.8" y="110.8" width="1.4" height="1.4" fill="#ff0000" shape-rendering="auto"/><rect x="605.8" y="113.8" width="1.4" height="1.4" fill="#ff0000" shape-rendering="auto"/><rect x="605.8" y="116.8" width="1.4" height="1.4" fill="#ff0000" shape-rendering="auto"/><rect x="605.8" y="120.8" width="1.4" height="1.4" fill="#ff0000" shape-rendering="auto"/><rect x="609.8" y="106.8" width="1.4" height="1.4" fill="#ff0000" shape-rendering="auto"/><rect x="609.8" y="110.8" width="1.4" height="1.4" fill="#ff0000" shape-rendering="auto"/><rect x="609.8" y="113.8" width="1.4" height="1.4" fill="#ff0000" shape-rendering="auto"/><rect x="609.8" y="116.8" width="1.4" height="1.4" fill="#ff0000" shape-rendering="auto"/><rect x="609.8" y="120.8" width="1.4" height="1.4" fill="#ff0000" shape-rendering="auto"/><rect x="598" y="109" width="1" height="1" fill="#303030"/><rect x="597" y="108" width="3" height="3" fill="none" stroke="#c8c8c8" stroke-width=".6" shape-rendering="auto"/><rect x="608" y="109" width="1" height="1" fill="#303030"/><rect x="607" y="108" width="3" height="3" fill="none" stroke="#c8c8c8" stroke-width=".6" shape-rendering="auto"/><rect x="598" y="119" width="1" height="1" fill="#303030"/><rect x="597" y="118" width="3" height="3" fill="none" stroke="#c8c8c8" stroke-width=".6" shape-rendering="auto"/><rect x="608" y="119" width="1" height="1" fill="#303030"/><rect x="607" y="118" width="3" height="3" fill="none" stroke="#c8c8c8" stroke-width=".6" shape-rendering="auto"/></svg><svg class="ic" style="left:617px;top:5px" width="19" height="19" viewBox="617 106 19 19" shape-rendering="crispEdges"><rect x="619" y="107" width="15" height="15" fill="#fff"/><rect x="619" y="107" width="1" height="15" fill="#8a9a9a"/><rect x="623" y="107" width="1" height="15" fill="#8a9a9a"/><rect x="626" y="107" width="1" height="15" fill="#8a9a9a"/><rect x="629" y="107" width="1" height="15" fill="#8a9a9a"/><rect x="633" y="107" width="1" height="15" fill="#8a9a9a"/><rect x="619" y="107" width="15" height="1" fill="#8a9a9a"/><rect x="619" y="111" width="15" height="1" fill="#8a9a9a"/><rect x="619" y="114" width="15" height="1" fill="#8a9a9a"/><rect x="619" y="117" width="15" height="1" fill="#8a9a9a"/><rect x="619" y="121" width="15" height="1" fill="#8a9a9a"/><path d="M626.5 111.5L629.5 114.5L626.5 117.5L623.5 114.5Z" fill="none" stroke="#fff" stroke-dasharray="1 1" shape-rendering="auto"/><rect x="622.8" y="106.8" width="1.4" height="1.4" fill="#ff0000" shape-rendering="auto"/><rect x="622.8" y="110.8" width="1.4" height="1.4" fill="#ff0000" shape-rendering="auto"/><rect x="622.8" y="113.8" width="1.4" height="1.4" fill="#ff0000" shape-rendering="auto"/><rect x="622.8" y="116.8" width="1.4" height="1.4" fill="#ff0000" shape-rendering="auto"/><rect x="622.8" y="120.8" width="1.4" height="1.4" fill="#ff0000" shape-rendering="auto"/><rect x="625.8" y="106.8" width="1.4" height="1.4" fill="#ff0000" shape-rendering="auto"/><rect x="625.8" y="110.8" width="1.4" height="1.4" fill="#ff0000" shape-rendering="auto"/><rect x="625.8" y="113.8" width="1.4" height="1.4" fill="#ff0000" shape-rendering="auto"/><rect x="625.8" y="116.8" width="1.4" height="1.4" fill="#ff0000" shape-rendering="auto"/><rect x="625.8" y="120.8" width="1.4" height="1.4" fill="#ff0000" shape-rendering="auto"/><rect x="628.8" y="106.8" width="1.4" height="1.4" fill="#ff0000" shape-rendering="auto"/><rect x="628.8" y="110.8" width="1.4" height="1.4" fill="#ff0000" shape-rendering="auto"/><rect x="628.8" y="113.8" width="1.4" height="1.4" fill="#ff0000" shape-rendering="auto"/><rect x="628.8" y="116.8" width="1.4" height="1.4" fill="#ff0000" shape-rendering="auto"/><rect x="628.8" y="120.8" width="1.4" height="1.4" fill="#ff0000" shape-rendering="auto"/><rect x="632.8" y="106.8" width="1.4" height="1.4" fill="#ff0000" shape-rendering="auto"/><rect x="632.8" y="110.8" width="1.4" height="1.4" fill="#ff0000" shape-rendering="auto"/><rect x="632.8" y="113.8" width="1.4" height="1.4" fill="#ff0000" shape-rendering="auto"/><rect x="632.8" y="116.8" width="1.4" height="1.4" fill="#ff0000" shape-rendering="auto"/><rect x="632.8" y="120.8" width="1.4" height="1.4" fill="#ff0000" shape-rendering="auto"/><rect x="621" y="109" width="1" height="1" fill="#303030"/><rect x="620" y="108" width="3" height="3" fill="none" stroke="#c8c8c8" stroke-width=".6" shape-rendering="auto"/><rect x="631" y="109" width="1" height="1" fill="#303030"/><rect x="630" y="108" width="3" height="3" fill="none" stroke="#c8c8c8" stroke-width=".6" shape-rendering="auto"/><rect x="621" y="119" width="1" height="1" fill="#303030"/><rect x="620" y="118" width="3" height="3" fill="none" stroke="#c8c8c8" stroke-width=".6" shape-rendering="auto"/><rect x="631" y="119" width="1" height="1" fill="#303030"/><rect x="630" y="118" width="3" height="3" fill="none" stroke="#c8c8c8" stroke-width=".6" shape-rendering="auto"/><g shape-rendering="auto"><rect x="619.8" y="108" width="1.5" height="14.5" fill="#000"/><rect x="619.8" y="121" width="13.5" height="1.5" fill="#000"/></g><path d="M618.4 109.8L620.5 106.6L622.6 109.8Z M632.2 119.6L635.2 121.75L632.2 123.9Z" fill="#000" stroke="none" stroke-width="0" shape-rendering="auto"/></svg><svg class="ic" style="left:641px;top:5px" width="18" height="18" viewBox="641 106 18 18" shape-rendering="crispEdges"><rect x="642" y="107" width="1" height="16" fill="#808080"/><rect x="653" y="107" width="1" height="16" fill="#808080"/><line x1="642" y1="116.5" x2="657" y2="108" stroke="#000" stroke-width="1" stroke-linecap="butt"/><line x1="642" y1="119.5" x2="657" y2="111" stroke="#000" stroke-width="1" stroke-linecap="butt"/><line x1="642" y1="122.5" x2="657" y2="114" stroke="#000" stroke-width="1" stroke-linecap="butt"/></svg><svg class="ic" style="left:676px;top:6px" width="16" height="17" viewBox="676 107 16 17" shape-rendering="crispEdges"><rect x="676" y="108" width="1" height="14" fill="#000"/><rect x="676" y="121" width="14" height="1" fill="#000"/><rect x="689" y="121" width="1" height="3" fill="#000"/><rect x="684" y="108" width="1" height="13" fill="#000"/><rect x="677" y="109" width="2" height="1" fill="#000"/><rect x="681" y="109" width="3" height="1" fill="#000"/><rect x="677" y="111" width="2" height="1" fill="#000"/><rect x="681" y="111" width="3" height="1" fill="#000"/><rect x="677" y="113" width="2" height="1" fill="#000"/><rect x="681" y="113" width="3" height="1" fill="#000"/><rect x="677" y="115" width="2" height="1" fill="#000"/><rect x="681" y="115" width="3" height="1" fill="#000"/><rect x="677" y="117" width="2" height="1" fill="#000"/><rect x="681" y="117" width="3" height="1" fill="#000"/><rect x="677" y="119" width="2" height="1" fill="#000"/><rect x="681" y="119" width="3" height="1" fill="#000"/><rect x="686" y="108" width="4" height="1" fill="#000"/><rect x="689" y="109" width="1" height="2" fill="#000"/><rect x="686" y="110" width="3" height="1" fill="#000"/><rect x="687" y="109" width="1" height="1" fill="#000"/><rect x="686" y="112" width="2" height="1" fill="#000"/><rect x="689" y="112" width="1" height="2" fill="#000"/><rect x="686" y="113" width="1" height="2" fill="#000"/><rect x="688" y="115" width="2" height="1" fill="#000"/><rect x="687" y="114" width="1" height="1" fill="#000"/><rect x="686" y="118" width="4" height="1" fill="#000"/><rect x="686" y="117" width="1" height="1" fill="#000"/><rect x="687" y="119" width="1" height="1" fill="#000"/></svg><svg class="ic" style="left:698px;top:5px" width="17" height="18" viewBox="698 106 17 18" shape-rendering="crispEdges"><rect x="698" y="107" width="16" height="1" fill="#ff0000"/><rect x="698" y="122" width="6" height="1" fill="#ff0000"/><path d="M700.3 121.8L706.3 107.9L710.2 112.4L713.9 108.6" fill="none" stroke="#000" stroke-width="1" shape-rendering="auto"/><rect x="706" y="113" width="8" height="1" fill="#ff0000"/><text x="704.8" y="122.8" font-family="Liberation Sans,sans-serif" font-size="11" fill="#ff0000" shape-rendering="auto" textLength="9.2" lengthAdjust="spacingAndGlyphs">%</text></svg><svg class="ic" style="left:721px;top:5px" width="16" height="18" viewBox="721 106 16 18"><text x="722.4" y="120.6" font-family="Liberation Sans,sans-serif" font-size="16" fill="#000" shape-rendering="auto" textLength="12.8" lengthAdjust="spacingAndGlyphs">%</text></svg><svg class="ic" style="left:743px;top:5px" width="18" height="18" viewBox="743 106 18 18" shape-rendering="crispEdges"><rect x="744" y="107" width="16" height="1" fill="#000"/><rect x="744" y="122" width="16" height="1" fill="#000"/><rect x="752" y="110" width="8" height="1" fill="#000"/><rect x="754" y="115" width="6" height="1" fill="#000"/><text x="743.8" y="121.2" font-family="Liberation Sans,sans-serif" font-size="10.5" fill="#ff0000" shape-rendering="auto" textLength="8.8" lengthAdjust="spacingAndGlyphs">%</text></svg><svg class="ic" style="left:766px;top:5px" width="18" height="18" viewBox="766 106 18 18" shape-rendering="crispEdges"><circle cx="774.9" cy="114.7" r="7.4" fill="#f8f8f8" stroke="#a8a8a8" stroke-width="1" shape-rendering="auto"/><text class="cj" x="769.7" y="119.8" font-size="10.5" fill="#808000" stroke="#808000" stroke-width="0.13" shape-rendering="auto">金</text></svg><svg class="ic" style="left:789px;top:5px" width="18" height="18" viewBox="789 106 18 18" shape-rendering="crispEdges"><rect x="790" y="107" width="16" height="1" fill="#000"/><rect x="798" y="110" width="8" height="1" fill="#000"/><rect x="799" y="116" width="7" height="1" fill="#000"/><rect x="790" y="122" width="16" height="1" fill="#000"/><text class="cj" x="789.4" y="120.5" font-size="10.5" fill="#808000" stroke="#808000" stroke-width="0.13" shape-rendering="auto">金</text></svg><svg class="ic" style="left:812px;top:5px" width="19" height="18" viewBox="812 106 19 18" shape-rendering="crispEdges"><rect x="815" y="107" width="1" height="16" fill="#000"/><rect x="813" y="109" width="5" height="1" fill="#000"/><rect x="813" y="122" width="5" height="1" fill="#000"/><rect x="814" y="111" width="3" height="1" fill="#000"/><rect x="814" y="113" width="3" height="1" fill="#000"/><rect x="813" y="116" width="5" height="1" fill="#000"/><g transform="translate(816.4,108) scale(0.85,0.88)" shape-rendering="auto"><path d="M9 2L11 -.2L15.2 .3V10.2L7.5 13.6L3.4 15.4L5.2 10.8Z" fill="#fff" stroke="#fff" stroke-width="1.6" shape-rendering="auto"/><path d="M8.6 3L14.9 8.4L14.6 10.2L7.8 12.8L5.9 11.6L6.2 8Z" fill="#999" stroke="none" stroke-width="1" shape-rendering="auto"/><path d="M9.5 4.5L13.5 8M8.3 6L12.6 9.6M7.3 8L11 10.8M9.5 6.2L8 10.5M11.6 7.5L10.2 11.4" fill="none" stroke="#fff" stroke-width="0.9" shape-rendering="auto"/><path d="M9 2.3L11 0L12.8 .2L13 1.4L15 .7V7.6Z" fill="#ff0000" stroke="none" stroke-width="1" shape-rendering="auto"/><path d="M9 2.2L15.1 8" fill="none" stroke="#000" stroke-width="1.4" shape-rendering="auto"/><path d="M9.2 2L5.2 11L3.6 15.2" fill="none" stroke="#000" stroke-width="1.3" shape-rendering="auto"/><path d="M15.1 7.5V10L7.6 13.5L3.6 15.4" fill="none" stroke="#000" stroke-width="1.3" shape-rendering="auto"/><path d="M5.2 11.4L6.6 11L8.2 12.6L5.6 14.2L4.2 14.2Z" fill="#ff0000" stroke="none" stroke-width="1" shape-rendering="auto"/></g></svg><svg class="ic" style="left:835px;top:5px" width="18" height="18" viewBox="835 106 18 18" shape-rendering="crispEdges"><rect x="836" y="107" width="16" height="1" fill="#ff0000"/><rect x="836" y="122" width="16" height="1" fill="#ff0000"/><rect x="836" y="114" width="16" height="1" fill="#000"/><path d="M836.5 120Q838.5 108 841 108.5Q843.5 109 845 117Q846.5 122.5 848 118Q850 109 851.5 108.5" fill="none" stroke="#909090" stroke-width="1.1" shape-rendering="auto"/></svg><svg class="ic" style="left:858px;top:5px" width="18" height="18" viewBox="858 106 18 18" shape-rendering="crispEdges"><rect x="859" y="107" width="16" height="1" fill="#ff0000"/><rect x="859" y="122" width="16" height="1" fill="#ff0000"/><text class="cj" x="861" y="119.9" font-size="11" fill="#808000" stroke="#808000" stroke-width="0.13" shape-rendering="auto">金</text></svg><svg class="ic" style="left:881px;top:5px" width="18" height="18" viewBox="881 106 18 18" shape-rendering="crispEdges"><title>J</title><rect x="882" y="122" width="1" height="1" fill="#000"/><rect x="883" y="121" width="1" height="1" fill="#000"/><rect x="884" y="120" width="1" height="1" fill="#000"/><rect x="885" y="119" width="1" height="1" fill="#000"/><rect x="886" y="118" width="1" height="1" fill="#000"/><rect x="887" y="117" width="1" height="1" fill="#000"/><rect x="888" y="116" width="1" height="1" fill="#000"/><rect x="889" y="115" width="1" height="1" fill="#000"/><rect x="890" y="114" width="1" height="1" fill="#000"/><rect x="891" y="113" width="1" height="1" fill="#000"/><rect x="892" y="112" width="1" height="1" fill="#000"/><rect x="893" y="111" width="1" height="1" fill="#000"/><rect x="894" y="110" width="1" height="1" fill="#000"/><rect x="895" y="109" width="1" height="1" fill="#000"/><rect x="896" y="108" width="1" height="1" fill="#000"/><rect x="897" y="107" width="1" height="1" fill="#000"/><g opacity=".35"><rect x="883" y="122" width="1" height="1" fill="#000"/><rect x="884" y="121" width="1" height="1" fill="#000"/><rect x="885" y="120" width="1" height="1" fill="#000"/><rect x="886" y="119" width="1" height="1" fill="#000"/><rect x="887" y="118" width="1" height="1" fill="#000"/><rect x="888" y="117" width="1" height="1" fill="#000"/><rect x="889" y="116" width="1" height="1" fill="#000"/><rect x="890" y="115" width="1" height="1" fill="#000"/><rect x="891" y="114" width="1" height="1" fill="#000"/><rect x="892" y="113" width="1" height="1" fill="#000"/><rect x="893" y="112" width="1" height="1" fill="#000"/><rect x="894" y="111" width="1" height="1" fill="#000"/><rect x="895" y="110" width="1" height="1" fill="#000"/><rect x="896" y="109" width="1" height="1" fill="#000"/><rect x="897" y="108" width="1" height="1" fill="#000"/></g><rect x="891" y="114" width="6" height="1" fill="#000"/><rect x="887" y="118" width="10" height="1" fill="#000"/><rect x="884" y="121" width="13" height="1" fill="#000"/><rect x="895" y="109" width="2" height="1" fill="#000"/><path d="M886.5 107V113.3Q886.3 115.4 884.4 115.4Q882.7 115.3 882.5 113" fill="none" stroke="#ff0000" stroke-width="1.3" shape-rendering="auto"/></svg><svg class="ic" style="left:904px;top:5px" width="18" height="18" viewBox="904 106 18 18" shape-rendering="crispEdges"><title>F</title><rect x="905" y="122" width="1" height="1" fill="#000"/><rect x="906" y="121" width="1" height="1" fill="#000"/><rect x="907" y="120" width="1" height="1" fill="#000"/><rect x="908" y="119" width="1" height="1" fill="#000"/><rect x="909" y="118" width="1" height="1" fill="#000"/><rect x="910" y="117" width="1" height="1" fill="#000"/><rect x="911" y="116" width="1" height="1" fill="#000"/><rect x="912" y="115" width="1" height="1" fill="#000"/><rect x="913" y="114" width="1" height="1" fill="#000"/><rect x="914" y="113" width="1" height="1" fill="#000"/><rect x="915" y="112" width="1" height="1" fill="#000"/><rect x="916" y="111" width="1" height="1" fill="#000"/><rect x="917" y="110" width="1" height="1" fill="#000"/><rect x="918" y="109" width="1" height="1" fill="#000"/><rect x="919" y="108" width="1" height="1" fill="#000"/><rect x="920" y="107" width="1" height="1" fill="#000"/><g opacity=".35"><rect x="906" y="122" width="1" height="1" fill="#000"/><rect x="907" y="121" width="1" height="1" fill="#000"/><rect x="908" y="120" width="1" height="1" fill="#000"/><rect x="909" y="119" width="1" height="1" fill="#000"/><rect x="910" y="118" width="1" height="1" fill="#000"/><rect x="911" y="117" width="1" height="1" fill="#000"/><rect x="912" y="116" width="1" height="1" fill="#000"/><rect x="913" y="115" width="1" height="1" fill="#000"/><rect x="914" y="114" width="1" height="1" fill="#000"/><rect x="915" y="113" width="1" height="1" fill="#000"/><rect x="916" y="112" width="1" height="1" fill="#000"/><rect x="917" y="111" width="1" height="1" fill="#000"/><rect x="918" y="110" width="1" height="1" fill="#000"/><rect x="919" y="109" width="1" height="1" fill="#000"/><rect x="920" y="108" width="1" height="1" fill="#000"/></g><rect x="914" y="114" width="6" height="1" fill="#000"/><rect x="910" y="118" width="10" height="1" fill="#000"/><rect x="907" y="121" width="13" height="1" fill="#000"/><rect x="918" y="109" width="2" height="1" fill="#000"/><rect x="906" y="107" width="2" height="10" fill="#ff0000"/><rect x="906" y="107" width="7" height="2" fill="#ff0000"/><rect x="906" y="111" width="6" height="1.4" fill="#ff0000"/></svg><svg class="ic" style="left:927px;top:5px" width="18" height="18" viewBox="927 106 18 18" shape-rendering="crispEdges"><rect x="928" y="122" width="1" height="1" fill="#000"/><rect x="929" y="121" width="1" height="1" fill="#000"/><rect x="930" y="120" width="1" height="1" fill="#000"/><rect x="931" y="119" width="1" height="1" fill="#000"/><rect x="932" y="118" width="1" height="1" fill="#000"/><rect x="933" y="117" width="1" height="1" fill="#000"/><rect x="934" y="116" width="1" height="1" fill="#000"/><rect x="935" y="115" width="1" height="1" fill="#000"/><rect x="936" y="114" width="1" height="1" fill="#000"/><rect x="937" y="113" width="1" height="1" fill="#000"/><rect x="938" y="112" width="1" height="1" fill="#000"/><rect x="939" y="111" width="1" height="1" fill="#000"/><rect x="940" y="110" width="1" height="1" fill="#000"/><rect x="941" y="109" width="1" height="1" fill="#000"/><rect x="942" y="108" width="1" height="1" fill="#000"/><rect x="943" y="107" width="1" height="1" fill="#000"/><g opacity=".35"><rect x="929" y="122" width="1" height="1" fill="#000"/><rect x="930" y="121" width="1" height="1" fill="#000"/><rect x="931" y="120" width="1" height="1" fill="#000"/><rect x="932" y="119" width="1" height="1" fill="#000"/><rect x="933" y="118" width="1" height="1" fill="#000"/><rect x="934" y="117" width="1" height="1" fill="#000"/><rect x="935" y="116" width="1" height="1" fill="#000"/><rect x="936" y="115" width="1" height="1" fill="#000"/><rect x="937" y="114" width="1" height="1" fill="#000"/><rect x="938" y="113" width="1" height="1" fill="#000"/><rect x="939" y="112" width="1" height="1" fill="#000"/><rect x="940" y="111" width="1" height="1" fill="#000"/><rect x="941" y="110" width="1" height="1" fill="#000"/><rect x="942" y="109" width="1" height="1" fill="#000"/><rect x="943" y="108" width="1" height="1" fill="#000"/></g><rect x="937" y="114" width="6" height="1" fill="#000"/><rect x="933" y="118" width="10" height="1" fill="#000"/><rect x="930" y="121" width="13" height="1" fill="#000"/><rect x="941" y="109" width="2" height="1" fill="#000"/><text class="cj" x="927.4" y="116.8" font-size="10.5" fill="#808000" stroke="#808000" stroke-width="0.13" shape-rendering="auto">金</text></svg><svg class="ic" style="left:950px;top:5px" width="18" height="18" viewBox="950 106 18 18" shape-rendering="crispEdges"><rect x="951" y="122" width="1" height="1" fill="#000"/><rect x="952" y="121" width="1" height="1" fill="#000"/><rect x="953" y="120" width="1" height="1" fill="#000"/><rect x="954" y="119" width="1" height="1" fill="#000"/><rect x="955" y="118" width="1" height="1" fill="#000"/><rect x="956" y="117" width="1" height="1" fill="#000"/><rect x="957" y="116" width="1" height="1" fill="#000"/><rect x="958" y="115" width="1" height="1" fill="#000"/><rect x="959" y="114" width="1" height="1" fill="#000"/><rect x="960" y="113" width="1" height="1" fill="#000"/><rect x="961" y="112" width="1" height="1" fill="#000"/><rect x="962" y="111" width="1" height="1" fill="#000"/><rect x="963" y="110" width="1" height="1" fill="#000"/><rect x="964" y="109" width="1" height="1" fill="#000"/><rect x="965" y="108" width="1" height="1" fill="#000"/><rect x="966" y="107" width="1" height="1" fill="#000"/><g opacity=".35"><rect x="952" y="122" width="1" height="1" fill="#000"/><rect x="953" y="121" width="1" height="1" fill="#000"/><rect x="954" y="120" width="1" height="1" fill="#000"/><rect x="955" y="119" width="1" height="1" fill="#000"/><rect x="956" y="118" width="1" height="1" fill="#000"/><rect x="957" y="117" width="1" height="1" fill="#000"/><rect x="958" y="116" width="1" height="1" fill="#000"/><rect x="959" y="115" width="1" height="1" fill="#000"/><rect x="960" y="114" width="1" height="1" fill="#000"/><rect x="961" y="113" width="1" height="1" fill="#000"/><rect x="962" y="112" width="1" height="1" fill="#000"/><rect x="963" y="111" width="1" height="1" fill="#000"/><rect x="964" y="110" width="1" height="1" fill="#000"/><rect x="965" y="109" width="1" height="1" fill="#000"/><rect x="966" y="108" width="1" height="1" fill="#000"/></g><rect x="960" y="114" width="6" height="1" fill="#000"/><rect x="956" y="118" width="10" height="1" fill="#000"/><rect x="953" y="121" width="13" height="1" fill="#000"/><rect x="964" y="109" width="2" height="1" fill="#000"/><text class="cj" x="950.4" y="117.2" font-size="11.5" fill="#ff0000" stroke="#ff0000" stroke-width="0.14" shape-rendering="auto">神</text></svg><svg class="ic" style="left:973px;top:5px" width="18" height="18" viewBox="973 106 18 18" shape-rendering="crispEdges"><rect x="974" y="122" width="1" height="1" fill="#000"/><rect x="975" y="121" width="1" height="1" fill="#000"/><rect x="976" y="120" width="1" height="1" fill="#000"/><rect x="977" y="119" width="1" height="1" fill="#000"/><rect x="978" y="118" width="1" height="1" fill="#000"/><rect x="979" y="117" width="1" height="1" fill="#000"/><rect x="980" y="116" width="1" height="1" fill="#000"/><rect x="981" y="115" width="1" height="1" fill="#000"/><rect x="982" y="114" width="1" height="1" fill="#000"/><rect x="983" y="113" width="1" height="1" fill="#000"/><rect x="984" y="112" width="1" height="1" fill="#000"/><rect x="985" y="111" width="1" height="1" fill="#000"/><rect x="986" y="110" width="1" height="1" fill="#000"/><rect x="987" y="109" width="1" height="1" fill="#000"/><rect x="988" y="108" width="1" height="1" fill="#000"/><rect x="989" y="107" width="1" height="1" fill="#000"/><g opacity=".35"><rect x="975" y="122" width="1" height="1" fill="#000"/><rect x="976" y="121" width="1" height="1" fill="#000"/><rect x="977" y="120" width="1" height="1" fill="#000"/><rect x="978" y="119" width="1" height="1" fill="#000"/><rect x="979" y="118" width="1" height="1" fill="#000"/><rect x="980" y="117" width="1" height="1" fill="#000"/><rect x="981" y="116" width="1" height="1" fill="#000"/><rect x="982" y="115" width="1" height="1" fill="#000"/><rect x="983" y="114" width="1" height="1" fill="#000"/><rect x="984" y="113" width="1" height="1" fill="#000"/><rect x="985" y="112" width="1" height="1" fill="#000"/><rect x="986" y="111" width="1" height="1" fill="#000"/><rect x="987" y="110" width="1" height="1" fill="#000"/><rect x="988" y="109" width="1" height="1" fill="#000"/><rect x="989" y="108" width="1" height="1" fill="#000"/></g><rect x="983" y="114" width="6" height="1" fill="#000"/><rect x="979" y="118" width="10" height="1" fill="#000"/><rect x="976" y="121" width="13" height="1" fill="#000"/><rect x="987" y="109" width="2" height="1" fill="#000"/><text class="cj" x="973.4" y="117.2" font-size="11.5" fill="#ff0000" stroke="#ff0000" stroke-width="0.14" shape-rendering="auto">赢</text></svg><svg class="ic" style="left:996px;top:5px" width="18" height="18" viewBox="996 106 18 18" shape-rendering="crispEdges"><rect x="997" y="122" width="1" height="1" fill="#000"/><rect x="998" y="121" width="1" height="1" fill="#000"/><rect x="999" y="120" width="1" height="1" fill="#000"/><rect x="1000" y="119" width="1" height="1" fill="#000"/><rect x="1001" y="118" width="1" height="1" fill="#000"/><rect x="1002" y="117" width="1" height="1" fill="#000"/><rect x="1003" y="116" width="1" height="1" fill="#000"/><rect x="1004" y="115" width="1" height="1" fill="#000"/><rect x="1005" y="114" width="1" height="1" fill="#000"/><rect x="1006" y="113" width="1" height="1" fill="#000"/><rect x="1007" y="112" width="1" height="1" fill="#000"/><rect x="1008" y="111" width="1" height="1" fill="#000"/><rect x="1009" y="110" width="1" height="1" fill="#000"/><rect x="1010" y="109" width="1" height="1" fill="#000"/><rect x="1011" y="108" width="1" height="1" fill="#000"/><rect x="1012" y="107" width="1" height="1" fill="#000"/><g opacity=".35"><rect x="998" y="122" width="1" height="1" fill="#000"/><rect x="999" y="121" width="1" height="1" fill="#000"/><rect x="1000" y="120" width="1" height="1" fill="#000"/><rect x="1001" y="119" width="1" height="1" fill="#000"/><rect x="1002" y="118" width="1" height="1" fill="#000"/><rect x="1003" y="117" width="1" height="1" fill="#000"/><rect x="1004" y="116" width="1" height="1" fill="#000"/><rect x="1005" y="115" width="1" height="1" fill="#000"/><rect x="1006" y="114" width="1" height="1" fill="#000"/><rect x="1007" y="113" width="1" height="1" fill="#000"/><rect x="1008" y="112" width="1" height="1" fill="#000"/><rect x="1009" y="111" width="1" height="1" fill="#000"/><rect x="1010" y="110" width="1" height="1" fill="#000"/><rect x="1011" y="109" width="1" height="1" fill="#000"/><rect x="1012" y="108" width="1" height="1" fill="#000"/></g><rect x="1006" y="114" width="6" height="1" fill="#000"/><rect x="1002" y="118" width="10" height="1" fill="#000"/><rect x="999" y="121" width="13" height="1" fill="#000"/><rect x="1010" y="109" width="2" height="1" fill="#000"/><text class="cj" x="996.4" y="117.2" font-size="11.5" fill="#ff0000" stroke="#ff0000" stroke-width="0.14" shape-rendering="auto">四</text></svg></div>
<div id="view"><svg class="t" style="left:2.5px;top:3px" width="34" height="18" role="img"><text x="0" y="13.76" font-size="13" fill="#0000ff" textLength="32.3" lengthAdjust="spacing">日K线</text></svg><span class="dt" style="left:71px">06-03</span><span class="dt" style="left:134px">06-17</span><span class="dt" style="left:207px">06-26</span><span class="dt" style="left:281px">07-05</span><span class="dt" style="left:355px">07-16</span><span class="dt" style="left:428px">07-25</span><span class="dt" style="left:501px">08-05</span><span class="dt" style="left:575px">08-14</span><span class="dt" style="left:649px">08-23</span><span class="dt" style="left:722px">09-03</span><span class="dt" style="left:795px">09-12</span><span class="dt" style="left:869px">09-25</span><span class="dt" style="left:943px">10-04</span><span id="hi">2313.4299</span>
<svg id="chart" width="1016" height="341" viewBox="0 128 1016 341" shape-rendering="crispEdges">
<g id="levels">
<rect x="70" y="140" width="946" height="1" fill="#8e8e8e"/>
<rect x="70" y="166" width="946" height="1" fill="#800080"/>
<rect x="70" y="203" width="946" height="1" fill="#808080"/>
<rect x="70" y="250" width="946" height="1" fill="#00ff00"/>
<rect x="70" y="278" width="946" height="1" fill="#ff0000"/>
<rect x="70" y="353" width="946" height="1" fill="#0000ff"/>
<rect x="70" y="390" width="946" height="1" fill="#800080"/>
<rect x="70" y="427" width="946" height="1" fill="#808080"/>
</g>
<path d="M74.5 158.5H77.5L94 163.5" fill="none" stroke="#0000ff" stroke-width="1" shape-rendering="auto"/>
<g id="candles">
<rect x="74" y="158" width="1" height="15" fill="#008000"/>
<rect x="70" y="168" width="9" height="1" fill="#008000"/>
<rect x="84" y="171" width="1" height="25" fill="#008000"/>
<rect x="80" y="171" width="9" height="19" fill="#008000"/>
<rect x="95" y="187" width="1" height="12" fill="#ff0000"/>
<rect x="91" y="192" width="9" height="1" fill="#ff0000"/>
<rect x="106" y="196" width="1" height="20" fill="#008000"/>
<rect x="102" y="197" width="9" height="17" fill="#008000"/>
<rect x="116" y="209" width="1" height="35" fill="#008000"/>
<rect x="112" y="214" width="9" height="25" fill="#008000"/>
<rect x="126" y="255" width="1" height="51" fill="#008000"/>
<rect x="122" y="255" width="9" height="33" fill="#008000"/>
<rect x="137" y="276" width="1" height="17" fill="#ff0000"/>
<rect x="133.5" y="277.5" width="8" height="10" fill="#fff" stroke="#ff0000"/>
<rect x="148" y="273" width="1" height="16" fill="#008000"/>
<rect x="144" y="274" width="9" height="8" fill="#008000"/>
<rect x="158" y="280" width="1" height="16" fill="#ff0000"/>
<rect x="154" y="280" width="9" height="1" fill="#ff0000"/>
<rect x="168" y="286" width="1" height="29" fill="#008000"/>
<rect x="164" y="286" width="9" height="6" fill="#008000"/>
<rect x="179" y="301" width="1" height="40" fill="#008000"/>
<rect x="175" y="301" width="9" height="38" fill="#008000"/>
<rect x="190" y="338" width="1" height="34" fill="#ff0000"/>
<rect x="186.5" y="348.5" width="8" height="10" fill="#fff" stroke="#ff0000"/>
<rect x="200" y="351" width="1" height="87" fill="#008000"/>
<rect x="196" y="351" width="9" height="83" fill="#008000"/>
<rect x="210" y="434" width="1" height="35" fill="#ff0000"/>
<rect x="206.5" y="437.5" width="8" height="8" fill="#fff" stroke="#ff0000"/>
<rect x="221" y="439" width="1" height="27" fill="#008000"/>
<rect x="217" y="441" width="9" height="3" fill="#008000"/>
<rect x="232" y="422" width="1" height="29" fill="#008000"/>
<rect x="228" y="441" width="9" height="4" fill="#008000"/>
<rect x="242" y="415" width="1" height="49" fill="#ff0000"/>
<rect x="238.5" y="422.5" width="8" height="33" fill="#fff" stroke="#ff0000"/>
<rect x="252" y="409" width="1" height="30" fill="#ff0000"/>
<rect x="248.5" y="409.5" width="8" height="22" fill="#fff" stroke="#ff0000"/>
<rect x="263" y="399" width="1" height="24" fill="#ff0000"/>
<rect x="259.5" y="400.5" width="8" height="10" fill="#fff" stroke="#ff0000"/>
<rect x="274" y="408" width="1" height="25" fill="#008000"/>
<rect x="270" y="408" width="9" height="2" fill="#008000"/>
<rect x="284" y="388" width="1" height="38" fill="#ff0000"/>
<rect x="280.5" y="401.5" width="8" height="17" fill="#fff" stroke="#ff0000"/>
<rect x="294" y="388" width="1" height="15" fill="#ff0000"/>
<rect x="290" y="400" width="9" height="1" fill="#ff0000"/>
<rect x="305" y="419" width="1" height="23" fill="#008000"/>
<rect x="301" y="419" width="9" height="19" fill="#008000"/>
<rect x="316" y="430" width="1" height="18" fill="#ff0000"/>
<rect x="312.5" y="433.5" width="8" height="8" fill="#fff" stroke="#ff0000"/>
<rect x="326" y="398" width="1" height="39" fill="#ff0000"/>
<rect x="322.5" y="399.5" width="8" height="35" fill="#fff" stroke="#ff0000"/>
<rect x="336" y="332" width="1" height="65" fill="#ff0000"/>
<rect x="332.5" y="348.5" width="8" height="48" fill="#fff" stroke="#ff0000"/>
<rect x="347" y="347" width="1" height="30" fill="#008000"/>
<rect x="343" y="352" width="9" height="22" fill="#008000"/>
<rect x="358" y="345" width="1" height="31" fill="#ff0000"/>
<rect x="354.5" y="358.5" width="8" height="10" fill="#fff" stroke="#ff0000"/>
<rect x="368" y="353" width="1" height="22" fill="#ff0000"/>
<rect x="364.5" y="353.5" width="8" height="8" fill="#fff" stroke="#ff0000"/>
<rect x="378" y="347" width="1" height="24" fill="#008000"/>
<rect x="374" y="357" width="9" height="13" fill="#008000"/>
<rect x="389" y="372" width="1" height="20" fill="#008000"/>
<rect x="385" y="375" width="9" height="12" fill="#008000"/>
<rect x="400" y="379" width="1" height="34" fill="#008000"/>
<rect x="396" y="385" width="9" height="26" fill="#008000"/>
<rect x="410" y="401" width="1" height="28" fill="#ff0000"/>
<rect x="406.5" y="402.5" width="8" height="20" fill="#fff" stroke="#ff0000"/>
<rect x="420" y="365" width="1" height="36" fill="#ff0000"/>
<rect x="416.5" y="371.5" width="8" height="26" fill="#fff" stroke="#ff0000"/>
<rect x="431" y="373" width="1" height="24" fill="#008000"/>
<rect x="427" y="377" width="9" height="2" fill="#008000"/>
<rect x="442" y="371" width="1" height="21" fill="#008000"/>
<rect x="438" y="376" width="9" height="13" fill="#008000"/>
<rect x="452" y="389" width="1" height="16" fill="#008000"/>
<rect x="448" y="395" width="9" height="2" fill="#008000"/>
<rect x="462" y="407" width="1" height="16" fill="#008000"/>
<rect x="458" y="407" width="9" height="14" fill="#008000"/>
<rect x="473" y="400" width="1" height="33" fill="#ff0000"/>
<rect x="469.5" y="413.5" width="8" height="6" fill="#fff" stroke="#ff0000"/>
<rect x="484" y="394" width="1" height="21" fill="#008000"/>
<rect x="480" y="405" width="9" height="5" fill="#008000"/>
<rect x="494" y="382" width="1" height="26" fill="#ff0000"/>
<rect x="490.5" y="382.5" width="8" height="22" fill="#fff" stroke="#ff0000"/>
<rect x="504" y="369" width="1" height="16" fill="#008000"/>
<rect x="500" y="374" width="9" height="8" fill="#008000"/>
<rect x="515" y="365" width="1" height="20" fill="#ff0000"/>
<rect x="511.5" y="366.5" width="8" height="13" fill="#fff" stroke="#ff0000"/>
<rect x="526" y="353" width="1" height="25" fill="#ff0000"/>
<rect x="522.5" y="358.5" width="8" height="12" fill="#fff" stroke="#ff0000"/>
<rect x="536" y="351" width="1" height="20" fill="#008000"/>
<rect x="532" y="361" width="9" height="7" fill="#008000"/>
<rect x="546" y="359" width="1" height="17" fill="#ff0000"/>
<rect x="542" y="370" width="9" height="1" fill="#ff0000"/>
<rect x="557" y="358" width="1" height="25" fill="#008000"/>
<rect x="553" y="364" width="9" height="1" fill="#008000"/>
<rect x="568" y="325" width="1" height="36" fill="#ff0000"/>
<rect x="564.5" y="325.5" width="8" height="33" fill="#fff" stroke="#ff0000"/>
<rect x="578" y="320" width="1" height="12" fill="#ff0000"/>
<rect x="574.5" y="322.5" width="8" height="3" fill="#fff" stroke="#ff0000"/>
<rect x="588" y="309" width="1" height="24" fill="#008000"/>
<rect x="584" y="319" width="9" height="7" fill="#008000"/>
<rect x="599" y="321" width="1" height="21" fill="#008000"/>
<rect x="595" y="327" width="9" height="14" fill="#008000"/>
<rect x="610" y="249" width="1" height="109" fill="#008000"/>
<rect x="606" y="345" width="9" height="6" fill="#008000"/>
<rect x="620" y="333" width="1" height="31" fill="#ff0000"/>
<rect x="616.5" y="338.5" width="8" height="23" fill="#fff" stroke="#ff0000"/>
<rect x="630" y="328" width="1" height="26" fill="#008000"/>
<rect x="626" y="341" width="9" height="7" fill="#008000"/>
<rect x="641" y="345" width="1" height="16" fill="#008000"/>
<rect x="637" y="345" width="9" height="3" fill="#008000"/>
<rect x="652" y="341" width="1" height="16" fill="#008000"/>
<rect x="648" y="351" width="9" height="1" fill="#008000"/>
<rect x="662" y="343" width="1" height="40" fill="#008000"/>
<rect x="658" y="345" width="9" height="15" fill="#008000"/>
<rect x="672" y="329" width="1" height="33" fill="#ff0000"/>
<rect x="668.5" y="329.5" width="8" height="27" fill="#fff" stroke="#ff0000"/>
<rect x="683" y="321" width="1" height="14" fill="#ff0000"/>
<rect x="679.5" y="324.5" width="8" height="5" fill="#fff" stroke="#ff0000"/>
<rect x="694" y="315" width="1" height="28" fill="#ff0000"/>
<rect x="690.5" y="325.5" width="8" height="7" fill="#fff" stroke="#ff0000"/>
<rect x="704" y="319" width="1" height="18" fill="#008000"/>
<rect x="700" y="320" width="9" height="9" fill="#008000"/>
<rect x="714" y="315" width="1" height="20" fill="#ff0000"/>
<rect x="710" y="328" width="9" height="1" fill="#ff0000"/>
<rect x="725" y="321" width="1" height="22" fill="#008000"/>
<rect x="721" y="323" width="9" height="5" fill="#008000"/>
<rect x="736" y="308" width="1" height="23" fill="#ff0000"/>
<rect x="732.5" y="308.5" width="8" height="17" fill="#fff" stroke="#ff0000"/>
<rect x="746" y="300" width="1" height="14" fill="#ff0000"/>
<rect x="742.5" y="305.5" width="8" height="3" fill="#fff" stroke="#ff0000"/>
<rect x="756" y="304" width="1" height="10" fill="#008000"/>
<rect x="752" y="307" width="9" height="2" fill="#008000"/>
<rect x="767" y="292" width="1" height="19" fill="#ff0000"/>
<rect x="763.5" y="295.5" width="8" height="15" fill="#fff" stroke="#ff0000"/>
<rect x="778" y="233" width="1" height="53" fill="#ff0000"/>
<rect x="774.5" y="238.5" width="8" height="47" fill="#fff" stroke="#ff0000"/>
<rect x="788" y="217" width="1" height="28" fill="#ff0000"/>
<rect x="784.5" y="218.5" width="8" height="17" fill="#fff" stroke="#ff0000"/>
<rect x="798" y="203" width="1" height="18" fill="#008000"/>
<rect x="794" y="212" width="9" height="3" fill="#008000"/>
<rect x="809" y="192" width="1" height="35" fill="#ff0000"/>
<rect x="805.5" y="204.5" width="8" height="14" fill="#fff" stroke="#ff0000"/>
<rect x="820" y="202" width="1" height="23" fill="#008000"/>
<rect x="816" y="207" width="9" height="12" fill="#008000"/>
<rect x="830" y="210" width="1" height="17" fill="#008000"/>
<rect x="826" y="212" width="9" height="11" fill="#008000"/>
<rect x="840" y="224" width="1" height="35" fill="#008000"/>
<rect x="836" y="224" width="9" height="35" fill="#008000"/>
<rect x="851" y="251" width="1" height="19" fill="#ff0000"/>
<rect x="847.5" y="254.5" width="8" height="4" fill="#fff" stroke="#ff0000"/>
<rect x="862" y="229" width="1" height="21" fill="#ff0000"/>
<rect x="858.5" y="231.5" width="8" height="16" fill="#fff" stroke="#ff0000"/>
<rect x="872" y="232" width="1" height="26" fill="#008000"/>
<rect x="868" y="232" width="9" height="10" fill="#008000"/>
<rect x="882" y="234" width="1" height="18" fill="#008000"/>
<rect x="878" y="243" width="9" height="6" fill="#008000"/>
<rect x="893" y="254" width="1" height="30" fill="#008000"/>
<rect x="889" y="254" width="9" height="28" fill="#008000"/>
<rect x="904" y="275" width="1" height="12" fill="#ff0000"/>
<rect x="900.5" y="278.5" width="8" height="7" fill="#fff" stroke="#ff0000"/>
<rect x="914" y="266" width="1" height="9" fill="#ff0000"/>
<rect x="910.5" y="268.5" width="8" height="4" fill="#fff" stroke="#ff0000"/>
<rect x="920" y="268" width="9" height="1" fill="#808080"/>
<rect x="931" y="268" width="9" height="1" fill="#808080"/>
<rect x="942" y="268" width="9" height="1" fill="#808080"/>
<rect x="952" y="268" width="9" height="1" fill="#808080"/>
<rect x="962" y="268" width="9" height="1" fill="#808080"/>
<rect x="973" y="268" width="9" height="1" fill="#808080"/>
<rect x="984" y="268" width="9" height="1" fill="#808080"/>
<rect x="994" y="268" width="9" height="1" fill="#808080"/>
<rect x="1004" y="268" width="9" height="1" fill="#808080"/>
<rect x="1015" y="268" width="9" height="1" fill="#808080"/>
</g>
</svg>
</div>
</div>
</body></html>
